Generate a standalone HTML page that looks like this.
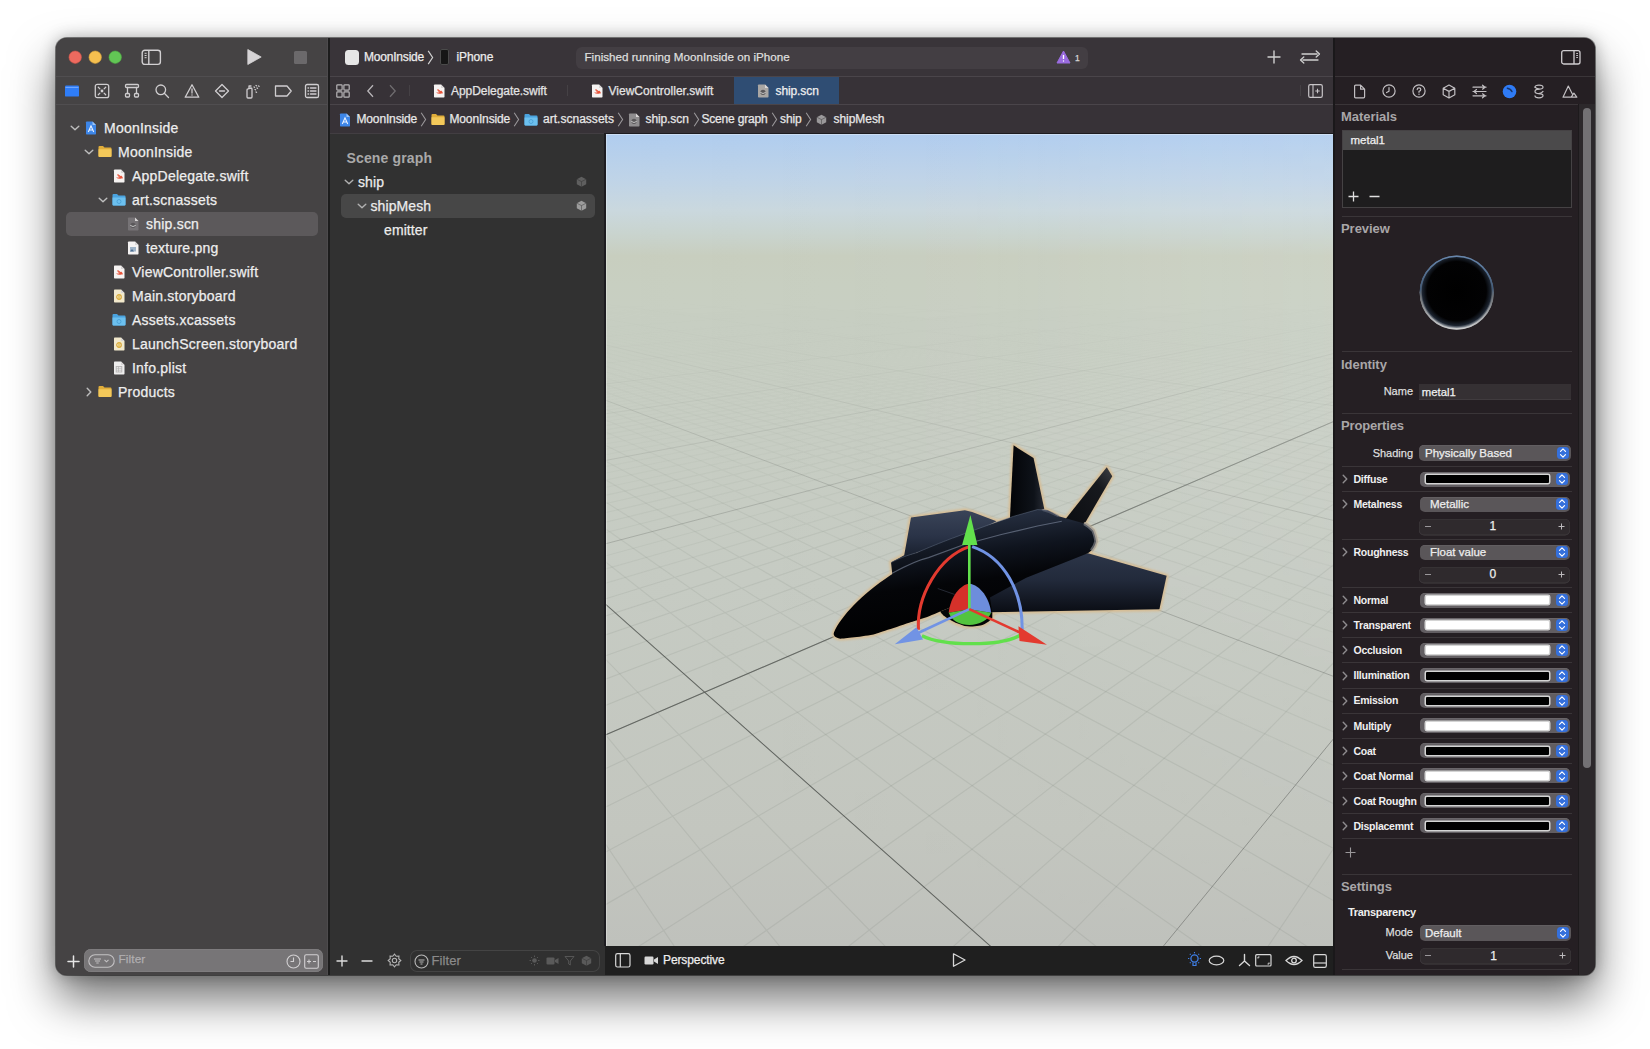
<!DOCTYPE html>
<html><head><meta charset="utf-8">
<style>
*{box-sizing:border-box;margin:0;padding:0}
html,body{width:1650px;height:1049px;background:#fff;overflow:hidden;font-family:"Liberation Sans",sans-serif;}
.a{position:absolute;display:block}
.t{position:absolute;white-space:nowrap}
.r{-webkit-text-stroke:0.25px currentColor}
#shadow{position:absolute;left:56px;top:38px;width:1539px;height:937px;border-radius:11px;background:#2f2c2f;box-shadow:0 24px 46px rgba(0,0,0,0.56),0 0 16px rgba(0,0,0,0.28),0 0 0 1px rgba(0,0,0,0.45)}
#app{position:absolute;left:0;top:0;width:1650px;height:1049px;clip-path:inset(38px 55px 74px 56px round 11px);}
</style></head><body>
<div id="shadow"></div>
<div id="app">
<div class="a" style="left:56px;top:38px;width:272px;height:937px;background:#454344;"></div>
<div class="a" style="left:56px;top:76px;width:272px;height:1px;background:#504e50;"></div>
<div class="a" style="left:56px;top:104px;width:272px;height:1px;background:#504e50;"></div>
<div class="a" style="left:327px;top:38px;width:1px;height:937px;background:#4d4b4d;"></div>
<div class="a" style="left:328px;top:38px;width:2px;height:937px;background:#1c1c1c;"></div>
<svg class="a" style="left:56px;top:38px;" width="80" height="38" viewBox="0 0 80 38"><circle cx="19.200000000000003" cy="19.2" r="6.2" fill="#ee6a5f" stroke="#d1554a" stroke-width="0.6"/><circle cx="39.2" cy="19.2" r="6.2" fill="#f5bf4f" stroke="#d9a23a" stroke-width="0.6"/><circle cx="59.2" cy="19.2" r="6.2" fill="#62c655" stroke="#4fae43" stroke-width="0.6"/></svg>
<svg class="a" style="left:141px;top:49px;" width="21" height="17" viewBox="0 0 21 17"><rect x="1.2" y="1.2" width="18.2" height="14.2" rx="2.6" fill="none" stroke="#d2d0d2" stroke-width="1.4"/><path d="M7.8 1.2 V15.4" stroke="#d2d0d2" stroke-width="1.4"/><path d="M3.6 4.3 H5.6 M3.6 6.5 H5.6 M3.6 8.7 H5.6" stroke="#d2d0d2" stroke-width="1"/></svg>
<svg class="a" style="left:245px;top:48px;" width="20" height="18" viewBox="0 0 20 18"><path d="M2.8 1.5 L16.2 9 L2.8 16.5 Z" fill="#d6d4d6" stroke="#d6d4d6" stroke-width="0.8" stroke-linejoin="round"/></svg>
<div class="a" style="left:294px;top:51px;width:13px;height:13px;background:#6b696b;border-radius:1.5px"></div>
<svg class="a" style="left:64px;top:84px;" width="16" height="14" viewBox="0 0 16 14"><rect x="1" y="1.6" width="14" height="11" rx="1.2" fill="#2f7df7"/><path d="M1.5 3.4 H14.5" stroke="#7fb0ff" stroke-width="0.9"/></svg>
<svg class="a" style="left:94px;top:83px;" width="16" height="16" viewBox="0 0 16 16"><rect x="1.3" y="1.3" width="13.4" height="13.4" rx="2" fill="none" stroke="#cfcdcf" stroke-width="1.3" stroke-linecap="round" stroke-linejoin="round"/><path d="M4.3 4.3 L5.9 5.9 M11.7 4.3 L10.1 5.9 M4.3 11.7 L5.9 10.1 M11.7 11.7 L10.1 10.1" fill="none" stroke="#cfcdcf" stroke-width="1.3" stroke-linecap="round" stroke-linejoin="round" stroke-width="1"/><circle cx="8" cy="8" r="1.4" fill="#d8d6d8"/></svg>
<svg class="a" style="left:124px;top:83px;" width="16" height="16" viewBox="0 0 16 16"><rect x="1.5" y="1.5" width="13" height="3" rx="1" fill="none" stroke="#cfcdcf" stroke-width="1.3" stroke-linecap="round" stroke-linejoin="round"/><path d="M3.5 4.5 V10.5 M12.5 4.5 V10.5" fill="none" stroke="#cfcdcf" stroke-width="1.3" stroke-linecap="round" stroke-linejoin="round"/><rect x="1.5" y="10.5" width="4" height="3.5" rx="1" fill="none" stroke="#cfcdcf" stroke-width="1.3" stroke-linecap="round" stroke-linejoin="round"/><rect x="10.5" y="10.5" width="4" height="3.5" rx="1" fill="none" stroke="#cfcdcf" stroke-width="1.3" stroke-linecap="round" stroke-linejoin="round"/></svg>
<svg class="a" style="left:154px;top:83px;" width="16" height="16" viewBox="0 0 16 16"><circle cx="6.8" cy="6.8" r="4.8" fill="none" stroke="#cfcdcf" stroke-width="1.3" stroke-linecap="round" stroke-linejoin="round"/><path d="M10.3 10.3 L14.5 14.5" fill="none" stroke="#cfcdcf" stroke-width="1.3" stroke-linecap="round" stroke-linejoin="round"/></svg>
<svg class="a" style="left:184px;top:83px;" width="16" height="16" viewBox="0 0 16 16"><path d="M8 1.8 L14.8 14.2 L1.2 14.2 Z" fill="none" stroke="#cfcdcf" stroke-width="1.3" stroke-linecap="round" stroke-linejoin="round"/><path d="M8 6 V10" fill="none" stroke="#cfcdcf" stroke-width="1.3" stroke-linecap="round" stroke-linejoin="round"/><circle cx="8" cy="12" r="0.7" fill="#cfcdcf"/></svg>
<svg class="a" style="left:214px;top:83px;" width="16" height="16" viewBox="0 0 16 16"><path d="M8 1.5 L14.5 8 L8 14.5 L1.5 8 Z" fill="none" stroke="#cfcdcf" stroke-width="1.3" stroke-linecap="round" stroke-linejoin="round"/><path d="M5.5 8 H10.5" fill="none" stroke="#cfcdcf" stroke-width="1.3" stroke-linecap="round" stroke-linejoin="round"/></svg>
<svg class="a" style="left:244px;top:83px;" width="17" height="16" viewBox="0 0 17 16"><path d="M3 7 Q3 6 4 5.8 L7 5 Q8 5 8 6 L8 14 Q8 15 7 15 L4 15 Q3 15 3 14 Z" fill="none" stroke="#cfcdcf" stroke-width="1.3" stroke-linecap="round" stroke-linejoin="round"/><path d="M5 5 V3 H7" fill="none" stroke="#cfcdcf" stroke-width="1.3" stroke-linecap="round" stroke-linejoin="round"/><path d="M10 4 L10.5 4.3 M12 2.5 L12.5 2.8 M11 6.5 L11.5 6.8 M13 5 L13.5 5.3 M12 9 L12.5 9.3 M14.5 3 L15 3.3" fill="none" stroke="#cfcdcf" stroke-width="1.3" stroke-linecap="round" stroke-linejoin="round" stroke-width="1"/></svg>
<svg class="a" style="left:274px;top:84px;" width="19" height="14" viewBox="0 0 19 14"><path d="M1.5 2 H13 L17.2 7 L13 12 H1.5 Z" fill="none" stroke="#cfcdcf" stroke-width="1.3" stroke-linecap="round" stroke-linejoin="round"/></svg>
<svg class="a" style="left:304px;top:83px;" width="16" height="16" viewBox="0 0 16 16"><rect x="1.5" y="1.5" width="13" height="13" rx="1.6" fill="none" stroke="#cfcdcf" stroke-width="1.3" stroke-linecap="round" stroke-linejoin="round"/><path d="M4 5 H4.6 M4 8 H4.6 M4 11 H4.6 M6.5 5 H12 M6.5 8 H12 M6.5 11 H12" fill="none" stroke="#cfcdcf" stroke-width="1.3" stroke-linecap="round" stroke-linejoin="round" stroke-width="1.1"/></svg>
<div class="a" style="left:66px;top:212px;width:252px;height:23.5px;background:#5c595b;border-radius:5px"></div>
<svg class="a" style="left:69.5px;top:123.5px;" width="10" height="8" viewBox="0 0 10 8"><path d="M1.2 2.2 L5 5.8 L8.8 2.2" fill="none" stroke="#bdbdbd" stroke-width="1.4" stroke-linecap="round" stroke-linejoin="round"/></svg>
<svg class="a" style="left:85px;top:120.5px;" width="12" height="14" viewBox="0 0 12 14"><path d="M1 1.2 Q1 0.5 1.7 0.5 L7.5 0.5 L11 4 L11 12.8 Q11 13.5 10.3 13.5 L1.7 13.5 Q1 13.5 1 12.8 Z" fill="#3d86e8"/><path d="M7.5 0.5 L7.5 4 L11 4 Z" fill="#9cc4f5"/><path d="M3.3 11 L6 4.8 L8.7 11 M4.2 9 H7.8" fill="none" stroke="#eaf2ff" stroke-width="1.1"/></svg>
<div class="t r" style="left:104px;top:118.15px;font-size:14px;line-height:20px;color:#eeeeee;font-weight:400;letter-spacing:0.22px;">MoonInside</div>
<svg class="a" style="left:83.5px;top:147.5px;" width="10" height="8" viewBox="0 0 10 8"><path d="M1.2 2.2 L5 5.8 L8.8 2.2" fill="none" stroke="#bdbdbd" stroke-width="1.4" stroke-linecap="round" stroke-linejoin="round"/></svg>
<svg class="a" style="left:98px;top:145.0px;" width="14" height="13" viewBox="0 0 14 13"><path d="M0.5 2 Q0.5 1 1.5 1 L5 1 L6.5 2.5 L12.5 2.5 Q13.5 2.5 13.5 3.5 L13.5 11 Q13.5 12 12.5 12 L1.5 12 Q0.5 12 0.5 11 Z" fill="#e0ad3a"/><path d="M0.5 4.3 L13.5 4.3 L13.5 11 Q13.5 12 12.5 12 L1.5 12 Q0.5 12 0.5 11 Z" fill="#f3c85a"/></svg>
<div class="t r" style="left:118px;top:142.15px;font-size:14px;line-height:20px;color:#eeeeee;font-weight:400;letter-spacing:0.22px;">MoonInside</div>
<svg class="a" style="left:113px;top:168.5px;" width="12" height="14" viewBox="0 0 12 14"><path d="M1 1.2 Q1 0.5 1.7 0.5 L8 0.5 L11.5 4 L11.5 12.8 Q11.5 13.5 10.8 13.5 L1.7 13.5 Q1 13.5 1 12.8 Z" fill="#f6f3f2"/><path d="M8 0.5 L8 4 L11.5 4 Z" fill="#d9d6d6"/><path d="M3 8.5 Q5.5 10.5 8.5 9.5 Q9.8 9 10 10.2 Q10 8 8.5 6.5 Q8 9 4 6 Q6 8.3 6.5 8.3 Q5 8.6 3 8.5Z" fill="#e8533a"/><path d="M4.5 5.5 L8 8" stroke="#e8533a" stroke-width="1.1"/></svg>
<div class="t r" style="left:132px;top:166.15px;font-size:14px;line-height:20px;color:#eeeeee;font-weight:400;letter-spacing:0.22px;">AppDelegate.swift</div>
<svg class="a" style="left:97.5px;top:195.5px;" width="10" height="8" viewBox="0 0 10 8"><path d="M1.2 2.2 L5 5.8 L8.8 2.2" fill="none" stroke="#bdbdbd" stroke-width="1.4" stroke-linecap="round" stroke-linejoin="round"/></svg>
<svg class="a" style="left:112px;top:193.0px;" width="14" height="13" viewBox="0 0 14 13"><path d="M0.5 2 Q0.5 1 1.5 1 L5 1 L6.5 2.5 L12.5 2.5 Q13.5 2.5 13.5 3.5 L13.5 11.5 Q13.5 12.5 12.5 12.5 L1.5 12.5 Q0.5 12.5 0.5 11.5 Z" fill="#4aa3df"/><path d="M0.5 4.5 L13.5 4.5 L13.5 11.5 Q13.5 12.5 12.5 12.5 L1.5 12.5 Q0.5 12.5 0.5 11.5 Z" fill="#6cc0ef"/><circle cx="7" cy="8.5" r="2" fill="none" stroke="#4a9fd6" stroke-width="0.9"/></svg>
<div class="t r" style="left:132px;top:190.15px;font-size:14px;line-height:20px;color:#eeeeee;font-weight:400;letter-spacing:0.22px;">art.scnassets</div>
<svg class="a" style="left:127px;top:216.5px;" width="12" height="14" viewBox="0 0 12 14"><path d="M1 1.2 Q1 0.5 1.7 0.5 L8 0.5 L11.5 4 L11.5 12.8 Q11.5 13.5 10.8 13.5 L1.7 13.5 Q1 13.5 1 12.8 Z" fill="#767376"/><path d="M8 0.5 L8 4 L11.5 4 Z" fill="#d9d6d6"/><circle cx="6" cy="8.3" r="2.6" fill="#5a585a"/><path d="M3.2 8.3 Q6 10.8 8.8 8.3" fill="none" stroke="#cfcfcf" stroke-width="0.9"/></svg>
<div class="t r" style="left:146px;top:214.15px;font-size:14px;line-height:20px;color:#eeeeee;font-weight:400;letter-spacing:0.22px;">ship.scn</div>
<svg class="a" style="left:127px;top:240.5px;" width="12" height="14" viewBox="0 0 12 14"><path d="M1 1.2 Q1 0.5 1.7 0.5 L8 0.5 L11.5 4 L11.5 12.8 Q11.5 13.5 10.8 13.5 L1.7 13.5 Q1 13.5 1 12.8 Z" fill="#f4f2f2"/><path d="M8 0.5 L8 4 L11.5 4 Z" fill="#d9d6d6"/><rect x="3" y="6" width="6" height="4.5" fill="#9fb4c8"/><path d="M3 10.5 L5 8 L7 10.5 Z" fill="#4d6f94"/></svg>
<div class="t r" style="left:146px;top:238.15px;font-size:14px;line-height:20px;color:#eeeeee;font-weight:400;letter-spacing:0.22px;">texture.png</div>
<svg class="a" style="left:113px;top:264.5px;" width="12" height="14" viewBox="0 0 12 14"><path d="M1 1.2 Q1 0.5 1.7 0.5 L8 0.5 L11.5 4 L11.5 12.8 Q11.5 13.5 10.8 13.5 L1.7 13.5 Q1 13.5 1 12.8 Z" fill="#f6f3f2"/><path d="M8 0.5 L8 4 L11.5 4 Z" fill="#d9d6d6"/><path d="M3 8.5 Q5.5 10.5 8.5 9.5 Q9.8 9 10 10.2 Q10 8 8.5 6.5 Q8 9 4 6 Q6 8.3 6.5 8.3 Q5 8.6 3 8.5Z" fill="#e8533a"/><path d="M4.5 5.5 L8 8" stroke="#e8533a" stroke-width="1.1"/></svg>
<div class="t r" style="left:132px;top:262.15px;font-size:14px;line-height:20px;color:#eeeeee;font-weight:400;letter-spacing:0.22px;">ViewController.swift</div>
<svg class="a" style="left:113px;top:288.5px;" width="12" height="14" viewBox="0 0 12 14"><path d="M1 1.2 Q1 0.5 1.7 0.5 L8 0.5 L11.5 4 L11.5 12.8 Q11.5 13.5 10.8 13.5 L1.7 13.5 Q1 13.5 1 12.8 Z" fill="#f2e9cc"/><path d="M8 0.5 L8 4 L11.5 4 Z" fill="#d9d6d6"/><circle cx="6" cy="8" r="2.3" fill="none" stroke="#d9a83a" stroke-width="1.2"/><rect x="5.3" y="5.5" width="1.4" height="5" fill="#e0b84a"/></svg>
<div class="t r" style="left:132px;top:286.15px;font-size:14px;line-height:20px;color:#eeeeee;font-weight:400;letter-spacing:0.22px;">Main.storyboard</div>
<svg class="a" style="left:112px;top:313.0px;" width="14" height="13" viewBox="0 0 14 13"><path d="M0.5 2 Q0.5 1 1.5 1 L5 1 L6.5 2.5 L12.5 2.5 Q13.5 2.5 13.5 3.5 L13.5 11.5 Q13.5 12.5 12.5 12.5 L1.5 12.5 Q0.5 12.5 0.5 11.5 Z" fill="#4aa3df"/><path d="M0.5 4.5 L13.5 4.5 L13.5 11.5 Q13.5 12.5 12.5 12.5 L1.5 12.5 Q0.5 12.5 0.5 11.5 Z" fill="#6cc0ef"/><circle cx="7" cy="8.5" r="2" fill="none" stroke="#4a9fd6" stroke-width="0.9"/></svg>
<div class="t r" style="left:132px;top:310.15px;font-size:14px;line-height:20px;color:#eeeeee;font-weight:400;letter-spacing:0.22px;">Assets.xcassets</div>
<svg class="a" style="left:113px;top:336.5px;" width="12" height="14" viewBox="0 0 12 14"><path d="M1 1.2 Q1 0.5 1.7 0.5 L8 0.5 L11.5 4 L11.5 12.8 Q11.5 13.5 10.8 13.5 L1.7 13.5 Q1 13.5 1 12.8 Z" fill="#f2e9cc"/><path d="M8 0.5 L8 4 L11.5 4 Z" fill="#d9d6d6"/><circle cx="6" cy="8" r="2.3" fill="none" stroke="#d9a83a" stroke-width="1.2"/><rect x="5.3" y="5.5" width="1.4" height="5" fill="#e0b84a"/></svg>
<div class="t r" style="left:132px;top:334.15px;font-size:14px;line-height:20px;color:#eeeeee;font-weight:400;letter-spacing:0.22px;">LaunchScreen.storyboard</div>
<svg class="a" style="left:113px;top:360.5px;" width="12" height="14" viewBox="0 0 12 14"><path d="M1 1.2 Q1 0.5 1.7 0.5 L8 0.5 L11.5 4 L11.5 12.8 Q11.5 13.5 10.8 13.5 L1.7 13.5 Q1 13.5 1 12.8 Z" fill="#eeeded"/><path d="M8 0.5 L8 4 L11.5 4 Z" fill="#d9d6d6"/><rect x="3.2" y="5.5" width="5.6" height="5.5" fill="none" stroke="#b5b3b3" stroke-width="0.9"/><path d="M3.2 7.3 H8.8 M3.2 9.2 H8.8 M5.5 5.5 V11" stroke="#b5b3b3" stroke-width="0.7"/></svg>
<div class="t r" style="left:132px;top:358.15px;font-size:14px;line-height:20px;color:#eeeeee;font-weight:400;letter-spacing:0.22px;">Info.plist</div>
<svg class="a" style="left:84.5px;top:386.5px;" width="8" height="10" viewBox="0 0 8 10"><path d="M2.2 1.2 L5.8 5 L2.2 8.8" fill="none" stroke="#bdbdbd" stroke-width="1.4" stroke-linecap="round" stroke-linejoin="round"/></svg>
<svg class="a" style="left:98px;top:385.0px;" width="14" height="13" viewBox="0 0 14 13"><path d="M0.5 2 Q0.5 1 1.5 1 L5 1 L6.5 2.5 L12.5 2.5 Q13.5 2.5 13.5 3.5 L13.5 11 Q13.5 12 12.5 12 L1.5 12 Q0.5 12 0.5 11 Z" fill="#e0ad3a"/><path d="M0.5 4.3 L13.5 4.3 L13.5 11 Q13.5 12 12.5 12 L1.5 12 Q0.5 12 0.5 11 Z" fill="#f3c85a"/></svg>
<div class="t r" style="left:118px;top:382.15px;font-size:14px;line-height:20px;color:#eeeeee;font-weight:400;letter-spacing:0.22px;">Products</div>
<svg class="a" style="left:67px;top:955px;" width="13" height="13" viewBox="0 0 13 13"><path d="M6.5 1 V12 M1 6.5 H12" stroke="#e6e6e6" stroke-width="1.5" stroke-linecap="round"/></svg>
<div class="a" style="left:84px;top:949px;width:239px;height:23px;background:#777577;border-radius:7px;box-shadow:inset 0 0 0 0.5px #858385"></div>
<svg class="a" style="left:88px;top:954px;" width="27" height="14" viewBox="0 0 27 14"><rect x="0.8" y="0.8" width="25.4" height="12.4" rx="6.2" fill="none" stroke="#c4c2c4" stroke-width="1.1"/><path d="M6 5 H13 M7 7 H12 M8.3 9 H10.7" stroke="#c4c2c4" stroke-width="1"/><path d="M16.5 5.8 L18.5 7.8 L20.5 5.8" fill="none" stroke="#c4c2c4" stroke-width="1.1"/></svg>
<div class="t r" style="left:118.5px;top:951.41px;font-size:11.8px;line-height:17px;color:#b0aeb0;font-weight:400;letter-spacing:0.1px;">Filter</div>
<svg class="a" style="left:286px;top:954px;" width="15" height="15" viewBox="0 0 15 15"><circle cx="7.5" cy="7.5" r="6.5" fill="none" stroke="#d2d0d2" stroke-width="1.1"/><path d="M7.5 3.5 V7.5 H4.5" fill="none" stroke="#d2d0d2" stroke-width="1.1"/></svg>
<svg class="a" style="left:304px;top:954px;" width="15" height="15" viewBox="0 0 15 15"><rect x="0.7" y="0.7" width="13.6" height="13.6" rx="1.5" fill="none" stroke="#d2d0d2" stroke-width="1.1"/><path d="M3 7.5 H7 M5 5.5 V9.5 M9 7.5 H12" stroke="#d2d0d2" stroke-width="1.1"/></svg>
<div class="a" style="left:330px;top:38px;width:1003px;height:38px;background:#393439;"></div>
<div class="a" style="left:330px;top:76px;width:1003px;height:1px;background:#4a454a;"></div>
<div class="a" style="left:330px;top:77px;width:1003px;height:27px;background:#373237;"></div>
<div class="a" style="left:330px;top:104px;width:1003px;height:1px;background:#4a454a;"></div>
<div class="a" style="left:330px;top:105px;width:1003px;height:28px;background:#373237;"></div>
<div class="a" style="left:344.5px;top:50px;width:14.5px;height:14.5px;background:#e6e6e6;border-radius:3.5px"></div>
<div class="t r" style="left:364px;top:48.84px;font-size:12px;line-height:17px;color:#ececec;font-weight:400;letter-spacing:-0.2px;">MoonInside</div>
<svg class="a" style="left:427px;top:50px;" width="7" height="15" viewBox="0 0 7 15"><path d="M1.2 0.8 L5.6 7.5 L1.2 14.2" fill="none" stroke="#cfcfcf" stroke-width="1.2"/></svg>
<div class="a" style="left:440px;top:48.5px;width:9px;height:16.5px;background:#161616;border-radius:2px;box-shadow:inset 0 0 0 1px #4a4a4a"></div>
<div class="t r" style="left:456.5px;top:48.84px;font-size:12px;line-height:17px;color:#ececec;font-weight:400;letter-spacing:-0.1px;">iPhone</div>
<div class="a" style="left:576px;top:47px;width:512px;height:22px;background:#433e43;border-radius:6px"></div>
<div class="t r" style="left:584.5px;top:49.46px;font-size:11.65px;line-height:16px;color:#dedede;font-weight:400;letter-spacing:0px;">Finished running MoonInside on iPhone</div>
<svg class="a" style="left:1056px;top:50px;" width="15" height="14" viewBox="0 0 15 14"><path d="M7.5 1 L14 13 L1 13 Z" fill="#9a6ce0" stroke="#9a6ce0" stroke-width="1" stroke-linejoin="round"/><path d="M7.5 5 V9" stroke="#fff" stroke-width="1.3"/><circle cx="7.5" cy="11" r="0.7" fill="#fff"/></svg>
<div class="t r" style="left:1075px;top:52.25px;font-size:8.5px;line-height:12px;color:#d8d8d8;font-weight:400;letter-spacing:0px;">1</div>
<svg class="a" style="left:1267px;top:50px;" width="14" height="14" viewBox="0 0 14 14"><path d="M7 1 V13 M1 7 H13" stroke="#d0d0d0" stroke-width="1.4" stroke-linecap="round"/></svg>
<svg class="a" style="left:1299px;top:49px;" width="22" height="16" viewBox="0 0 22 16"><path d="M4 11 H19 M1.5 11 L4.8 8 M1.5 11 L4.8 14 M3 5 H18 M20.5 5 L17.2 2 M20.5 5 L17.2 8" fill="none" stroke="#d0d0d0" stroke-width="1.3" stroke-linecap="round"/></svg>
<svg class="a" style="left:336px;top:84px;" width="14" height="14" viewBox="0 0 14 14"><g fill="none" stroke="#b8b5b8" stroke-width="1.2"><rect x="0.8" y="0.8" width="5.3" height="5.3" rx="0.8"/><rect x="7.9" y="0.8" width="5.3" height="5.3" rx="0.8"/><rect x="0.8" y="7.9" width="5.3" height="5.3" rx="0.8"/><rect x="7.9" y="7.9" width="5.3" height="5.3" rx="0.8"/></g></svg>
<svg class="a" style="left:366px;top:84px;" width="9" height="14" viewBox="0 0 9 14"><path d="M7 1.2 L1.8 7 L7 12.8" fill="none" stroke="#b8b5b8" stroke-width="1.3"/></svg>
<svg class="a" style="left:388px;top:84px;" width="9" height="14" viewBox="0 0 9 14"><path d="M2 1.2 L7.2 7 L2 12.8" fill="none" stroke="#6f6c6f" stroke-width="1.3"/></svg>
<div class="a" style="left:409px;top:85px;width:1px;height:11px;background:#454145;"></div>
<svg class="a" style="left:433px;top:83.5px;" width="12" height="14" viewBox="0 0 12 14"><path d="M1 1.2 Q1 0.5 1.7 0.5 L8 0.5 L11.5 4 L11.5 12.8 Q11.5 13.5 10.8 13.5 L1.7 13.5 Q1 13.5 1 12.8 Z" fill="#f6f3f2"/><path d="M8 0.5 L8 4 L11.5 4 Z" fill="#d9d6d6"/><path d="M3 8.5 Q5.5 10.5 8.5 9.5 Q9.8 9 10 10.2 Q10 8 8.5 6.5 Q8 9 4 6 Q6 8.3 6.5 8.3 Q5 8.6 3 8.5Z" fill="#e8533a"/><path d="M4.5 5.5 L8 8" stroke="#e8533a" stroke-width="1.1"/></svg>
<div class="t r" style="left:451px;top:82.64px;font-size:12px;line-height:17px;color:#e4e4e4;font-weight:400;letter-spacing:-0.05px;">AppDelegate.swift</div>
<div class="a" style="left:567px;top:85px;width:1px;height:11px;background:#454145;"></div>
<svg class="a" style="left:591px;top:83.5px;" width="12" height="14" viewBox="0 0 12 14"><path d="M1 1.2 Q1 0.5 1.7 0.5 L8 0.5 L11.5 4 L11.5 12.8 Q11.5 13.5 10.8 13.5 L1.7 13.5 Q1 13.5 1 12.8 Z" fill="#f6f3f2"/><path d="M8 0.5 L8 4 L11.5 4 Z" fill="#d9d6d6"/><path d="M3 8.5 Q5.5 10.5 8.5 9.5 Q9.8 9 10 10.2 Q10 8 8.5 6.5 Q8 9 4 6 Q6 8.3 6.5 8.3 Q5 8.6 3 8.5Z" fill="#e8533a"/><path d="M4.5 5.5 L8 8" stroke="#e8533a" stroke-width="1.1"/></svg>
<div class="t r" style="left:608.5px;top:82.64px;font-size:12px;line-height:17px;color:#e4e4e4;font-weight:400;letter-spacing:0.02px;">ViewController.swift</div>
<div class="a" style="left:734px;top:77px;width:105px;height:27px;background:#2f4d73;"></div>
<svg class="a" style="left:757px;top:83.5px;" width="12" height="14" viewBox="0 0 12 14"><path d="M1 1.2 Q1 0.5 1.7 0.5 L8 0.5 L11.5 4 L11.5 12.8 Q11.5 13.5 10.8 13.5 L1.7 13.5 Q1 13.5 1 12.8 Z" fill="#a9a6a3"/><path d="M8 0.5 L8 4 L11.5 4 Z" fill="#d9d6d6"/><circle cx="6" cy="8.3" r="2.6" fill="#5a585a"/><path d="M3.2 8.3 Q6 10.8 8.8 8.3" fill="none" stroke="#cfcfcf" stroke-width="0.9"/></svg>
<div class="t r" style="left:775.5px;top:82.64px;font-size:12px;line-height:17px;color:#f0f0f0;font-weight:400;letter-spacing:-0.1px;">ship.scn</div>
<div class="a" style="left:1300px;top:85px;width:1px;height:11px;background:#454145;"></div>
<svg class="a" style="left:1308px;top:84px;" width="15" height="14" viewBox="0 0 15 14"><rect x="0.7" y="0.7" width="13.6" height="12.6" rx="1.6" fill="none" stroke="#c8c5c8" stroke-width="1.2"/><path d="M5 0.7 V13.3 M7.3 7 H11.7 M9.5 4.8 V9.2" stroke="#c8c5c8" stroke-width="1.1"/></svg>
<svg class="a" style="left:338.5px;top:112.5px;" width="12" height="14" viewBox="0 0 12 14"><path d="M1 1.2 Q1 0.5 1.7 0.5 L7.5 0.5 L11 4 L11 12.8 Q11 13.5 10.3 13.5 L1.7 13.5 Q1 13.5 1 12.8 Z" fill="#3d86e8"/><path d="M7.5 0.5 L7.5 4 L11 4 Z" fill="#9cc4f5"/><path d="M3.3 11 L6 4.8 L8.7 11 M4.2 9 H7.8" fill="none" stroke="#eaf2ff" stroke-width="1.1"/></svg>
<div class="t r" style="left:356.5px;top:111.44px;font-size:12px;line-height:17px;color:#e8e8e8;font-weight:400;letter-spacing:-0.15px;">MoonInside</div>
<svg class="a" style="left:420px;top:112px;" width="7" height="15" viewBox="0 0 7 15"><path d="M1.2 0.8 L5.6 7.5 L1.2 14.2" fill="none" stroke="#9a979a" stroke-width="1.1"/></svg>
<svg class="a" style="left:430.5px;top:113px;" width="14" height="13" viewBox="0 0 14 13"><path d="M0.5 2 Q0.5 1 1.5 1 L5 1 L6.5 2.5 L12.5 2.5 Q13.5 2.5 13.5 3.5 L13.5 11 Q13.5 12 12.5 12 L1.5 12 Q0.5 12 0.5 11 Z" fill="#e0ad3a"/><path d="M0.5 4.3 L13.5 4.3 L13.5 11 Q13.5 12 12.5 12 L1.5 12 Q0.5 12 0.5 11 Z" fill="#f3c85a"/></svg>
<div class="t r" style="left:449.5px;top:111.44px;font-size:12px;line-height:17px;color:#e8e8e8;font-weight:400;letter-spacing:-0.15px;">MoonInside</div>
<svg class="a" style="left:513px;top:112px;" width="7" height="15" viewBox="0 0 7 15"><path d="M1.2 0.8 L5.6 7.5 L1.2 14.2" fill="none" stroke="#9a979a" stroke-width="1.1"/></svg>
<svg class="a" style="left:523.5px;top:113px;" width="14" height="13" viewBox="0 0 14 13"><path d="M0.5 2 Q0.5 1 1.5 1 L5 1 L6.5 2.5 L12.5 2.5 Q13.5 2.5 13.5 3.5 L13.5 11.5 Q13.5 12.5 12.5 12.5 L1.5 12.5 Q0.5 12.5 0.5 11.5 Z" fill="#4aa3df"/><path d="M0.5 4.5 L13.5 4.5 L13.5 11.5 Q13.5 12.5 12.5 12.5 L1.5 12.5 Q0.5 12.5 0.5 11.5 Z" fill="#6cc0ef"/><circle cx="7" cy="8.5" r="2" fill="none" stroke="#4a9fd6" stroke-width="0.9"/></svg>
<div class="t r" style="left:543px;top:111.44px;font-size:12px;line-height:17px;color:#e8e8e8;font-weight:400;letter-spacing:0.02px;">art.scnassets</div>
<svg class="a" style="left:617px;top:112px;" width="7" height="15" viewBox="0 0 7 15"><path d="M1.2 0.8 L5.6 7.5 L1.2 14.2" fill="none" stroke="#9a979a" stroke-width="1.1"/></svg>
<svg class="a" style="left:627.5px;top:112.5px;" width="12" height="14" viewBox="0 0 12 14"><path d="M1 1.2 Q1 0.5 1.7 0.5 L8 0.5 L11.5 4 L11.5 12.8 Q11.5 13.5 10.8 13.5 L1.7 13.5 Q1 13.5 1 12.8 Z" fill="#8f8d8f"/><path d="M8 0.5 L8 4 L11.5 4 Z" fill="#d9d6d6"/><circle cx="6" cy="8.3" r="2.6" fill="#5a585a"/><path d="M3.2 8.3 Q6 10.8 8.8 8.3" fill="none" stroke="#cfcfcf" stroke-width="0.9"/></svg>
<div class="t r" style="left:645.5px;top:111.44px;font-size:12px;line-height:17px;color:#e8e8e8;font-weight:400;letter-spacing:-0.1px;">ship.scn</div>
<svg class="a" style="left:693px;top:112px;" width="7" height="15" viewBox="0 0 7 15"><path d="M1.2 0.8 L5.6 7.5 L1.2 14.2" fill="none" stroke="#9a979a" stroke-width="1.1"/></svg>
<div class="t r" style="left:701.5px;top:111.44px;font-size:12px;line-height:17px;color:#e8e8e8;font-weight:400;letter-spacing:-0.2px;">Scene graph</div>
<svg class="a" style="left:770.5px;top:112px;" width="7" height="15" viewBox="0 0 7 15"><path d="M1.2 0.8 L5.6 7.5 L1.2 14.2" fill="none" stroke="#9a979a" stroke-width="1.1"/></svg>
<div class="t r" style="left:780px;top:111.44px;font-size:12px;line-height:17px;color:#e8e8e8;font-weight:400;letter-spacing:-0.1px;">ship</div>
<svg class="a" style="left:804.5px;top:112px;" width="7" height="15" viewBox="0 0 7 15"><path d="M1.2 0.8 L5.6 7.5 L1.2 14.2" fill="none" stroke="#9a979a" stroke-width="1.1"/></svg>
<svg class="a" style="left:816px;top:113.5px;" width="11" height="11.5" viewBox="0 0 11 11.5"><path d="M5.5 0.8 L10.2 3.2 L10.2 8.3 L5.5 10.7 L0.8 8.3 L0.8 3.2 Z" fill="#9a989a"/><path d="M0.8 3.2 L5.5 5.6 L10.2 3.2 M5.5 5.6 V10.7" fill="none" stroke="#2f2f2f" stroke-width="0.8" opacity="0.55"/></svg>
<div class="t r" style="left:833.5px;top:111.44px;font-size:12px;line-height:17px;color:#e8e8e8;font-weight:400;letter-spacing:-0.05px;">shipMesh</div>
<div class="a" style="left:330px;top:134px;width:275px;height:812px;background:#313131;"></div>
<div class="t" style="left:346.5px;top:148.35px;font-size:14px;line-height:20px;color:#a9a9a9;font-weight:700;letter-spacing:0.15px;">Scene graph</div>
<svg class="a" style="left:343.7px;top:178px;" width="10" height="8" viewBox="0 0 10 8"><path d="M1.2 2.2 L5 5.8 L8.8 2.2" fill="none" stroke="#b0b0b0" stroke-width="1.4" stroke-linecap="round" stroke-linejoin="round"/></svg>
<div class="t r" style="left:358px;top:171.75px;font-size:14px;line-height:20px;color:#ececec;font-weight:400;letter-spacing:0.1px;">ship</div>
<svg class="a" style="left:575.5px;top:176px;" width="11" height="11.5" viewBox="0 0 11 11.5"><path d="M5.5 0.8 L10.2 3.2 L10.2 8.3 L5.5 10.7 L0.8 8.3 L0.8 3.2 Z" fill="#5f5f5f"/><path d="M0.8 3.2 L5.5 5.6 L10.2 3.2 M5.5 5.6 V10.7" fill="none" stroke="#2f2f2f" stroke-width="0.8" opacity="0.55"/></svg>
<div class="a" style="left:341px;top:194px;width:254px;height:23.5px;background:#474747;border-radius:5px"></div>
<svg class="a" style="left:357px;top:202px;" width="10" height="8" viewBox="0 0 10 8"><path d="M1.2 2.2 L5 5.8 L8.8 2.2" fill="none" stroke="#b0b0b0" stroke-width="1.4" stroke-linecap="round" stroke-linejoin="round"/></svg>
<div class="t r" style="left:370.5px;top:195.75px;font-size:14px;line-height:20px;color:#ececec;font-weight:400;letter-spacing:0.1px;">shipMesh</div>
<svg class="a" style="left:575.5px;top:200px;" width="11" height="11.5" viewBox="0 0 11 11.5"><path d="M5.5 0.8 L10.2 3.2 L10.2 8.3 L5.5 10.7 L0.8 8.3 L0.8 3.2 Z" fill="#9c9c9c"/><path d="M0.8 3.2 L5.5 5.6 L10.2 3.2 M5.5 5.6 V10.7" fill="none" stroke="#2f2f2f" stroke-width="0.8" opacity="0.55"/></svg>
<div class="t r" style="left:384px;top:219.75px;font-size:14px;line-height:20px;color:#ececec;font-weight:400;letter-spacing:0.1px;">emitter</div>
<div class="a" style="left:330px;top:946px;width:275px;height:29px;background:#313131;"></div>
<svg class="a" style="left:336px;top:955px;" width="12" height="12" viewBox="0 0 12 12"><path d="M6 1 V11 M1 6 H11" stroke="#dcdcdc" stroke-width="1.4" stroke-linecap="round"/></svg>
<svg class="a" style="left:361px;top:955px;" width="12" height="12" viewBox="0 0 12 12"><path d="M1 6 H11" stroke="#dcdcdc" stroke-width="1.4" stroke-linecap="round"/></svg>
<svg class="a" style="left:386.5px;top:953px;" width="15" height="15" viewBox="0 0 15 15"><g fill="none" stroke="#b4b4b4" stroke-width="1.1"><circle cx="7.5" cy="7.5" r="2.2"/><path d="M13.80 7.50 L11.75 9.26 L11.95 11.95 L9.26 11.75 L7.50 13.80 L5.74 11.75 L3.05 11.95 L3.25 9.26 L1.20 7.50 L3.25 5.74 L3.05 3.05 L5.74 3.25 L7.50 1.20 L9.26 3.25 L11.95 3.05 L11.75 5.74 Z"/></g></svg>
<div class="a" style="left:410px;top:950px;width:190px;height:21.5px;background:#303030;border-radius:7px;box-shadow:inset 0 0 0 1px #444444"></div>
<svg class="a" style="left:414px;top:953.5px;" width="15" height="15" viewBox="0 0 15 15"><circle cx="7.5" cy="7.5" r="6.5" fill="none" stroke="#b8b8b8" stroke-width="1.1"/><path d="M4.5 6 H10.5 M5.5 8 H9.5 M6.5 10 H8.5" stroke="#b8b8b8" stroke-width="1"/></svg>
<div class="t r" style="left:431.5px;top:951.50px;font-size:13px;line-height:18px;color:#8a8a8a;font-weight:400;letter-spacing:0.1px;">Filter</div>
<svg class="a" style="left:529px;top:955px;" width="11" height="11" viewBox="0 0 11 11"><circle cx="5.5" cy="5.5" r="2.3" fill="#5a5a5a"/><path d="M5.5 0.5 V2 M5.5 9 V10.5 M0.5 5.5 H2 M9 5.5 H10.5 M2 2 L3 3 M8 8 L9 9 M2 9 L3 8 M8 3 L9 2" stroke="#5a5a5a" stroke-width="0.9"/></svg>
<svg class="a" style="left:546px;top:955.5px;" width="13" height="10" viewBox="0 0 13 10"><rect x="0.5" y="1.5" width="8" height="7" rx="1" fill="#5a5a5a"/><path d="M9 4 L12.5 2 V8 L9 6 Z" fill="#5a5a5a"/></svg>
<svg class="a" style="left:564px;top:955px;" width="11" height="11" viewBox="0 0 11 11"><path d="M1 1.5 H10 L6.3 6 V10 L4.7 9 V6 Z" fill="none" stroke="#5a5a5a" stroke-width="0.9"/></svg>
<svg class="a" style="left:581px;top:954.5px;" width="11" height="11.5" viewBox="0 0 11 11.5"><path d="M5.5 0.8 L10.2 3.2 L10.2 8.3 L5.5 10.7 L0.8 8.3 L0.8 3.2 Z" fill="#5a5a5a"/><path d="M0.8 3.2 L5.5 5.6 L10.2 3.2 M5.5 5.6 V10.7" fill="none" stroke="#2f2f2f" stroke-width="0.8" opacity="0.55"/></svg>
<svg class="a" style="left:605px;top:134px" width="728" height="812" viewBox="0 0 728 812"><defs><linearGradient id="sky" gradientUnits="userSpaceOnUse" x1="0" y1="0" x2="0" y2="812"><stop offset="0" stop-color="#b0cdef"/><stop offset="0.059" stop-color="#c0d4e7"/><stop offset="0.094" stop-color="#cad8de"/><stop offset="0.122" stop-color="#c9d4cf"/><stop offset="0.150" stop-color="#c8cebf"/><stop offset="0.185" stop-color="#c8cfc1"/><stop offset="0.234" stop-color="#c8cfc3"/><stop offset="0.37" stop-color="#c7cdc3"/><stop offset="0.55" stop-color="#c6cbc3"/><stop offset="0.86" stop-color="#c3c6bf"/><stop offset="1" stop-color="#bfc1bc"/></linearGradient><linearGradient id="fogm" gradientUnits="userSpaceOnUse" x1="0" y1="114" x2="0" y2="534"><stop offset="0" stop-color="#000"/><stop offset="0.12" stop-color="#000"/><stop offset="0.35" stop-color="#666"/><stop offset="0.65" stop-color="#c8c8c8"/><stop offset="1" stop-color="#fff"/></linearGradient><linearGradient id="hl" x1="0" y1="0" x2="1" y2="0"><stop offset="0" stop-color="#fff" stop-opacity="0"/><stop offset="0.5" stop-color="#fff" stop-opacity="0.02"/><stop offset="1" stop-color="#fff" stop-opacity="0.09"/></linearGradient><linearGradient id="hlm" x1="0" y1="0" x2="0" y2="1"><stop offset="0" stop-color="#fff"/><stop offset="0.35" stop-color="#fff"/><stop offset="0.7" stop-color="#444"/><stop offset="1" stop-color="#000"/></linearGradient><mask id="hm" maskUnits="userSpaceOnUse" x="0" y="0" width="728" height="812"><rect width="728" height="812" fill="url(#hlm)"/></mask><mask id="gm" maskUnits="userSpaceOnUse" x="0" y="0" width="728" height="812"><rect width="728" height="812" fill="url(#fogm)"/></mask></defs><rect width="728" height="812" fill="url(#sky)"/><rect width="728" height="812" fill="url(#hl)" mask="url(#hm)"/><g mask="url(#gm)"><path d="M-399.9 114.3 L-4951.0 2185.0 M-399.9 114.3 L-4892.5 2309.2 M-399.9 114.3 L-4737.9 2600.6 M-399.9 114.3 L-4635.2 2771.9 M-399.9 114.3 L-4509.2 2962.8 M-399.9 114.3 L-4353.4 3175.3 M-399.9 114.3 L-4159.5 3410.7 M-399.9 114.3 L-3916.7 3668.6 M-399.9 114.3 L-3612.3 3945.9 M-399.9 114.3 L-3232.1 4234.9 M-399.9 114.3 L-2762.9 4520.7 M-399.9 114.3 L-1539.8 4982.6 M-399.9 114.3 L-814.0 5097.1 M-399.9 114.3 L-60.9 5102.8 M-399.9 114.3 L669.8 4998.5 M-399.9 114.3 L1335.5 4803.5 M-399.9 114.3 L1910.8 4548.3 M-399.9 114.3 L2389.4 4263.9 M-399.9 114.3 L2778.0 3974.5 M-399.9 114.3 L3089.3 3695.5 M1130.9 114.3 L4635.3 3680.7 M1130.9 114.3 L4329.7 3957.2 M1130.9 114.3 L3478.8 4528.8 M1130.9 114.3 L2913.5 4785.7 M1130.9 114.3 L2257.9 4985.7 M1130.9 114.3 L1535.0 5098.0 M1130.9 114.3 L785.9 5102.4 M1130.9 114.3 L59.3 4998.1 M1130.9 114.3 L-602.9 4804.1 M1130.9 114.3 L-1175.7 4550.5 M1130.9 114.3 L-1652.8 4267.8 M1130.9 114.3 L-2351.7 3702.0 M1130.9 114.3 L-2600.2 3442.8 M1130.9 114.3 L-2798.9 3205.7 M1130.9 114.3 L-2958.5 2991.2 M1130.9 114.3 L-3087.6 2798.3 M1130.9 114.3 L-3192.9 2625.2 M1130.9 114.3 L-3279.4 2469.9 M1130.9 114.3 L-3351.2 2330.4 M1130.9 114.3 L-3411.1 2204.7" stroke="#4a4f4a" stroke-opacity="0.098" stroke-width="1.15" fill="none"/><path d="M-399.9 114.3 L3536.0 3197.9 M-399.9 114.3 L3695.2 2983.1 M-399.9 114.3 L3823.8 2790.0 M-399.9 114.3 L3928.7 2617.0 M-399.9 114.3 L4014.8 2461.7 M-399.9 114.3 L4086.1 2322.3 M1130.9 114.3 L-3504.5 1988.5 M1130.9 114.3 L-3541.2 1895.1 M1130.9 114.3 L-3572.8 1810.0 M1130.9 114.3 L-3600.1 1732.3 M1130.9 114.3 L-3623.9 1660.9 M1130.9 114.3 L-3644.7 1595.3" stroke="#4a4f4a" stroke-opacity="0.098" stroke-width="1.15" fill="none"/><path d="M-399.9 114.3 L4145.7 2196.8 M-399.9 114.3 L4195.9 2083.5 M-399.9 114.3 L4238.5 1981.0 M-399.9 114.3 L4306.3 1802.9 M-399.9 114.3 L4333.4 1725.3 M-399.9 114.3 L4357.0 1654.2 M-399.9 114.3 L4377.7 1588.8 M-399.9 114.3 L4395.9 1528.5 M1130.9 114.3 L-3663.1 1534.8 M1130.9 114.3 L-3679.3 1478.9 M1130.9 114.3 L-3693.7 1427.0 M1130.9 114.3 L-3718.1 1333.9 M1130.9 114.3 L-3728.4 1292.0 M1130.9 114.3 L-3737.7 1252.8 M1130.9 114.3 L-3746.2 1216.1 M1130.9 114.3 L-3753.9 1181.6" stroke="#4a4f4a" stroke-opacity="0.069" stroke-width="1.15" fill="none"/><path d="M-399.9 114.3 L4412.0 1472.7 M-399.9 114.3 L4426.3 1421.0 M-399.9 114.3 L4439.0 1373.0 M-399.9 114.3 L4450.4 1328.3 M-399.9 114.3 L4470.0 1247.5 M-399.9 114.3 L4478.3 1210.9 M-399.9 114.3 L4485.9 1176.5 M-399.9 114.3 L4492.8 1144.2 M-399.9 114.3 L4499.1 1113.8 M-399.9 114.3 L4504.9 1085.0 M-399.9 114.3 L4510.2 1057.9 M1130.9 114.3 L-3760.8 1149.1 M1130.9 114.3 L-3767.2 1118.5 M1130.9 114.3 L-3773.0 1089.7 M1130.9 114.3 L-3778.4 1062.4 M1130.9 114.3 L-3787.8 1012.1 M1130.9 114.3 L-3792.0 988.9 M1130.9 114.3 L-3795.9 966.8 M1130.9 114.3 L-3799.5 945.8 M1130.9 114.3 L-3802.8 925.8 M1130.9 114.3 L-3805.9 906.8 M1130.9 114.3 L-3808.8 888.6" stroke="#4a4f4a" stroke-opacity="0.049" stroke-width="1.15" fill="none"/><path d="M-399.9 114.3 L4515.1 1032.1 M-399.9 114.3 L4519.6 1007.8 M-399.9 114.3 L4527.6 962.7 M-399.9 114.3 L4531.1 941.8 M-399.9 114.3 L4534.4 921.9 M-399.9 114.3 L4537.5 902.9 M-399.9 114.3 L4540.3 884.7 M-399.9 114.3 L4543.0 867.4 M-399.9 114.3 L4545.5 850.8 M-399.9 114.3 L4547.8 835.0 M-399.9 114.3 L4550.0 819.8 M-399.9 114.3 L4554.0 791.2 M-399.9 114.3 L4555.8 777.8 M1130.9 114.3 L-3811.5 871.2 M1130.9 114.3 L-3814.0 854.5 M1130.9 114.3 L-3818.6 823.3 M1130.9 114.3 L-3820.6 808.6 M1130.9 114.3 L-3822.6 794.6 M1130.9 114.3 L-3824.4 781.1 M1130.9 114.3 L-3826.2 768.1 M1130.9 114.3 L-3827.8 755.6 M1130.9 114.3 L-3829.3 743.6 M1130.9 114.3 L-3830.8 732.0 M1130.9 114.3 L-3832.2 720.8 M1130.9 114.3 L-3834.7 699.6 M1130.9 114.3 L-3835.9 689.6" stroke="#4a4f4a" stroke-opacity="0.035" stroke-width="1.15" fill="none"/><path d="M-399.9 114.3 L4557.6 764.8 M-399.9 114.3 L4559.2 752.4 M-399.9 114.3 L4560.7 740.4 M-399.9 114.3 L4562.1 728.9 M-399.9 114.3 L4563.5 717.8 M-399.9 114.3 L4564.8 707.0 M-399.9 114.3 L4566.0 696.7 M-399.9 114.3 L4568.3 677.0 M-399.9 114.3 L4569.3 667.7 M-399.9 114.3 L4570.3 658.6 M-399.9 114.3 L4571.3 649.9 M-399.9 114.3 L4572.2 641.4 M-399.9 114.3 L4573.1 633.2 M-399.9 114.3 L4573.9 625.2 M-399.9 114.3 L4574.7 617.5 M-399.9 114.3 L4575.4 610.0 M-399.9 114.3 L4576.8 595.6 M1130.9 114.3 L-3837.0 679.9 M1130.9 114.3 L-3838.1 670.5 M1130.9 114.3 L-3839.1 661.4 M1130.9 114.3 L-3840.0 652.6 M1130.9 114.3 L-3840.9 644.1 M1130.9 114.3 L-3841.8 635.8 M1130.9 114.3 L-3842.7 627.8 M1130.9 114.3 L-3844.2 612.5 M1130.9 114.3 L-3844.9 605.2 M1130.9 114.3 L-3845.6 598.1 M1130.9 114.3 L-3846.3 591.2 M1130.9 114.3 L-3846.9 584.5 M1130.9 114.3 L-3847.5 578.0 M1130.9 114.3 L-3848.1 571.6 M1130.9 114.3 L-3848.7 565.4 M1130.9 114.3 L-3849.2 559.4 M1130.9 114.3 L-3850.3 547.9 M1130.9 114.3 L-3850.7 542.3" stroke="#4a4f4a" stroke-opacity="0.025" stroke-width="1.15" fill="none"/><path d="M-399.9 114.3 L4577.5 588.8 M-399.9 114.3 L4578.1 582.1 M-399.9 114.3 L4578.7 575.6 M-399.9 114.3 L4579.3 569.3 M-399.9 114.3 L4579.9 563.1 M-399.9 114.3 L4580.4 557.2 M-399.9 114.3 L4580.9 551.3 M-399.9 114.3 L4581.4 545.7 M-399.9 114.3 L4582.3 534.7 M-399.9 114.3 L4582.8 529.5 M-399.9 114.3 L4583.2 524.4 M-399.9 114.3 L4583.6 519.4 M-399.9 114.3 L4584.0 514.5 M-399.9 114.3 L4584.4 509.7 M-399.9 114.3 L4584.8 505.1 M-399.9 114.3 L4585.1 500.5 M-399.9 114.3 L4585.5 496.1 M-399.9 114.3 L4586.1 487.5 M-399.9 114.3 L4586.4 483.3 M-399.9 114.3 L4586.7 479.3 M-399.9 114.3 L4587.0 475.3 M-399.9 114.3 L4587.3 471.4 M-399.9 114.3 L4587.6 467.6 M-399.9 114.3 L4587.8 463.9 M1130.9 114.3 L-3851.2 536.9 M1130.9 114.3 L-3851.6 531.6 M1130.9 114.3 L-3852.1 526.5 M1130.9 114.3 L-3852.5 521.4 M1130.9 114.3 L-3852.9 516.5 M1130.9 114.3 L-3853.3 511.8 M1130.9 114.3 L-3853.6 507.1 M1130.9 114.3 L-3854.3 498.0 M1130.9 114.3 L-3854.7 493.7 M1130.9 114.3 L-3855.0 489.4 M1130.9 114.3 L-3855.3 485.2 M1130.9 114.3 L-3855.6 481.2 M1130.9 114.3 L-3855.9 477.2 M1130.9 114.3 L-3856.2 473.3 M1130.9 114.3 L-3856.5 469.5 M1130.9 114.3 L-3856.7 465.7 M1130.9 114.3 L-3857.2 458.5 M1130.9 114.3 L-3857.5 454.9 M1130.9 114.3 L-3857.7 451.5 M1130.9 114.3 L-3857.9 448.1 M1130.9 114.3 L-3858.2 444.8 M1130.9 114.3 L-3858.4 441.6 M1130.9 114.3 L-3858.6 438.4" stroke="#4a4f4a" stroke-opacity="0.018" stroke-width="1.15" fill="none"/><path d="M-399.9 114.3 L4588.1 460.3 M-399.9 114.3 L4588.3 456.7 M-399.9 114.3 L4588.8 449.8 M-399.9 114.3 L4589.0 446.4 M-399.9 114.3 L4589.2 443.1 M-399.9 114.3 L4589.4 439.9 M-399.9 114.3 L4589.6 436.7 M-399.9 114.3 L4589.8 433.6 M-399.9 114.3 L4590.0 430.6 M-399.9 114.3 L4590.2 427.6 M-399.9 114.3 L4590.4 424.7 M-399.9 114.3 L4590.8 419.0 M-399.9 114.3 L4590.9 416.2 M-399.9 114.3 L4591.1 413.5 M-399.9 114.3 L4591.3 410.8 M-399.9 114.3 L4591.4 408.2 M-399.9 114.3 L4591.6 405.6 M-399.9 114.3 L4591.7 403.0 M-399.9 114.3 L4591.9 400.5 M-399.9 114.3 L4592.0 398.1 M-399.9 114.3 L4592.3 393.3 M-399.9 114.3 L4592.4 391.0 M-399.9 114.3 L4592.5 388.7 M-399.9 114.3 L4592.6 386.4 M-399.9 114.3 L4592.8 384.2 M-399.9 114.3 L4592.9 382.0 M-399.9 114.3 L4593.0 379.9 M-399.9 114.3 L4593.1 377.8 M-399.9 114.3 L4593.2 375.7 M1130.9 114.3 L-3858.8 435.3 M1130.9 114.3 L-3859.0 432.2 M1130.9 114.3 L-3859.3 426.3 M1130.9 114.3 L-3859.5 423.4 M1130.9 114.3 L-3859.7 420.5 M1130.9 114.3 L-3859.9 417.8 M1130.9 114.3 L-3860.0 415.0 M1130.9 114.3 L-3860.2 412.3 M1130.9 114.3 L-3860.4 409.7 M1130.9 114.3 L-3860.5 407.1 M1130.9 114.3 L-3860.7 404.5 M1130.9 114.3 L-3860.9 399.6 M1130.9 114.3 L-3861.1 397.2 M1130.9 114.3 L-3861.2 394.8 M1130.9 114.3 L-3861.3 392.4 M1130.9 114.3 L-3861.5 390.1 M1130.9 114.3 L-3861.6 387.9 M1130.9 114.3 L-3861.7 385.6 M1130.9 114.3 L-3861.8 383.4 M1130.9 114.3 L-3862.0 381.3 M1130.9 114.3 L-3862.2 377.1 M1130.9 114.3 L-3862.3 375.0 M1130.9 114.3 L-3862.4 373.0 M1130.9 114.3 L-3862.5 371.0 M1130.9 114.3 L-3862.6 369.0 M1130.9 114.3 L-3862.7 367.1 M1130.9 114.3 L-3862.8 365.2 M1130.9 114.3 L-3862.9 363.3 M1130.9 114.3 L-3863.0 361.5 M1130.9 114.3 L-3863.2 357.9" stroke="#4a4f4a" stroke-opacity="0.013" stroke-width="1.15" fill="none"/><path d="M-399.9 114.3 L4593.4 371.7 M-399.9 114.3 L4593.5 369.7 M-399.9 114.3 L4593.6 367.7 M-399.9 114.3 L4593.7 365.8 M-399.9 114.3 L4593.8 363.9 M-399.9 114.3 L4593.9 362.0 M-399.9 114.3 L4594.0 360.2 M-399.9 114.3 L4594.1 358.4 M-399.9 114.3 L4594.2 356.6 M-399.9 114.3 L4594.3 353.1 M-399.9 114.3 L4594.4 351.4 M-399.9 114.3 L4594.5 349.7 M-399.9 114.3 L4594.6 348.1 M-399.9 114.3 L4594.7 346.4 M-399.9 114.3 L4594.7 344.8 M-399.9 114.3 L4594.8 343.2 M-399.9 114.3 L4594.9 341.6 M-399.9 114.3 L4594.9 340.1 M-399.9 114.3 L4595.1 337.1 M-399.9 114.3 L4595.2 335.6 M-399.9 114.3 L4595.2 334.1 M-399.9 114.3 L4595.3 332.7 M-399.9 114.3 L4595.3 331.2 M-399.9 114.3 L4595.4 329.8 M-399.9 114.3 L4595.5 328.4 M-399.9 114.3 L4595.5 327.0 M-399.9 114.3 L4595.6 325.7 M-399.9 114.3 L4595.7 323.0 M-399.9 114.3 L4595.7 321.7 M-399.9 114.3 L4595.8 320.4 M-399.9 114.3 L4595.9 319.2 M-399.9 114.3 L4595.9 317.9 M-399.9 114.3 L4596.0 316.7 M-399.9 114.3 L4596.0 315.4 M-399.9 114.3 L4596.1 314.2 M-399.9 114.3 L4596.1 313.0 M-399.9 114.3 L4596.2 310.7 M-399.9 114.3 L4596.2 309.5 M-399.9 114.3 L4596.3 308.4 M1130.9 114.3 L-3863.2 356.1 M1130.9 114.3 L-3863.3 354.4 M1130.9 114.3 L-3863.4 352.6 M1130.9 114.3 L-3863.5 351.0 M1130.9 114.3 L-3863.6 349.3 M1130.9 114.3 L-3863.6 347.6 M1130.9 114.3 L-3863.7 346.0 M1130.9 114.3 L-3863.8 344.4 M1130.9 114.3 L-3863.9 341.3 M1130.9 114.3 L-3864.0 339.7 M1130.9 114.3 L-3864.1 338.2 M1130.9 114.3 L-3864.1 336.7 M1130.9 114.3 L-3864.2 335.3 M1130.9 114.3 L-3864.3 333.8 M1130.9 114.3 L-3864.3 332.4 M1130.9 114.3 L-3864.4 330.9 M1130.9 114.3 L-3864.5 329.5 M1130.9 114.3 L-3864.6 326.8 M1130.9 114.3 L-3864.6 325.5 M1130.9 114.3 L-3864.7 324.1 M1130.9 114.3 L-3864.7 322.8 M1130.9 114.3 L-3864.8 321.5 M1130.9 114.3 L-3864.8 320.2 M1130.9 114.3 L-3864.9 319.0 M1130.9 114.3 L-3865.0 317.7 M1130.9 114.3 L-3865.0 316.5 M1130.9 114.3 L-3865.1 314.1 M1130.9 114.3 L-3865.1 312.9 M1130.9 114.3 L-3865.2 311.7 M1130.9 114.3 L-3865.2 310.5 M1130.9 114.3 L-3865.3 309.4 M1130.9 114.3 L-3865.3 308.2 M1130.9 114.3 L-3865.4 307.1 M1130.9 114.3 L-3865.4 306.0 M1130.9 114.3 L-3865.5 304.9 M1130.9 114.3 L-3865.5 302.8 M1130.9 114.3 L-3865.6 301.7 M1130.9 114.3 L-3865.6 300.6 M1130.9 114.3 L-3865.7 299.6" stroke="#4a4f4a" stroke-opacity="0.009" stroke-width="1.15" fill="none"/><path d="M-399.9 114.3 L4596.3 307.2 M-399.9 114.3 L4596.4 306.1 M-399.9 114.3 L4596.4 305.0 M-399.9 114.3 L4596.5 303.9 M-399.9 114.3 L4596.5 302.8 M-399.9 114.3 L4596.5 301.8 M-399.9 114.3 L4596.6 299.7 M-399.9 114.3 L4596.7 298.6 M-399.9 114.3 L4596.7 297.6 M-399.9 114.3 L4596.7 296.6 M-399.9 114.3 L4596.8 295.6 M-399.9 114.3 L4596.8 294.6 M-399.9 114.3 L4596.8 293.6 M-399.9 114.3 L4596.9 292.7 M-399.9 114.3 L4596.9 291.7 M-399.9 114.3 L4597.0 289.8 M-399.9 114.3 L4597.0 288.9 M-399.9 114.3 L4597.0 288.0 M-399.9 114.3 L4597.1 287.1 M-399.9 114.3 L4597.1 286.2 M-399.9 114.3 L4597.1 285.3 M-399.9 114.3 L4597.2 284.4 M-399.9 114.3 L4597.2 283.6 M-399.9 114.3 L4597.2 282.7 M-399.9 114.3 L4597.3 281.0 M-399.9 114.3 L4597.3 280.2 M-399.9 114.3 L4597.3 279.3 M-399.9 114.3 L4597.4 278.5 M-399.9 114.3 L4597.4 277.7 M-399.9 114.3 L4597.4 276.9 M-399.9 114.3 L4597.4 276.1 M-399.9 114.3 L4597.5 275.3 M-399.9 114.3 L4597.5 274.6 M-399.9 114.3 L4597.5 273.0 M-399.9 114.3 L4597.6 272.3 M-399.9 114.3 L4597.6 271.5 M-399.9 114.3 L4597.6 270.8 M-399.9 114.3 L4597.6 270.0 M-399.9 114.3 L4597.6 269.3 M-399.9 114.3 L4597.7 268.6 M-399.9 114.3 L4597.7 267.9 M-399.9 114.3 L4597.7 267.2 M-399.9 114.3 L4597.8 265.8 M-399.9 114.3 L4597.8 265.1 M-399.9 114.3 L4597.8 264.4 M-399.9 114.3 L4597.8 263.7 M-399.9 114.3 L4597.8 263.0 M-399.9 114.3 L4597.9 262.4 M-399.9 114.3 L4597.9 261.7 M-399.9 114.3 L4597.9 261.1 M-399.9 114.3 L4597.9 260.4 M1130.9 114.3 L-3865.7 298.6 M1130.9 114.3 L-3865.7 297.6 M1130.9 114.3 L-3865.8 296.6 M1130.9 114.3 L-3865.8 295.6 M1130.9 114.3 L-3865.8 294.6 M1130.9 114.3 L-3865.9 292.7 M1130.9 114.3 L-3865.9 291.7 M1130.9 114.3 L-3866.0 290.8 M1130.9 114.3 L-3866.0 289.8 M1130.9 114.3 L-3866.0 288.9 M1130.9 114.3 L-3866.1 288.0 M1130.9 114.3 L-3866.1 287.1 M1130.9 114.3 L-3866.1 286.2 M1130.9 114.3 L-3866.2 285.3 M1130.9 114.3 L-3866.2 283.6 M1130.9 114.3 L-3866.3 282.7 M1130.9 114.3 L-3866.3 281.9 M1130.9 114.3 L-3866.3 281.0 M1130.9 114.3 L-3866.3 280.2 M1130.9 114.3 L-3866.4 279.4 M1130.9 114.3 L-3866.4 278.6 M1130.9 114.3 L-3866.4 277.8 M1130.9 114.3 L-3866.4 277.0 M1130.9 114.3 L-3866.5 275.4 M1130.9 114.3 L-3866.5 274.6 M1130.9 114.3 L-3866.5 273.9 M1130.9 114.3 L-3866.6 273.1 M1130.9 114.3 L-3866.6 272.3 M1130.9 114.3 L-3866.6 271.6 M1130.9 114.3 L-3866.6 270.9 M1130.9 114.3 L-3866.7 270.1 M1130.9 114.3 L-3866.7 269.4 M1130.9 114.3 L-3866.7 268.0 M1130.9 114.3 L-3866.8 267.3 M1130.9 114.3 L-3866.8 266.6 M1130.9 114.3 L-3866.8 265.9 M1130.9 114.3 L-3866.8 265.2 M1130.9 114.3 L-3866.8 264.5 M1130.9 114.3 L-3866.9 263.8 M1130.9 114.3 L-3866.9 263.2 M1130.9 114.3 L-3866.9 262.5 M1130.9 114.3 L-3866.9 261.2 M1130.9 114.3 L-3867.0 260.5 M1130.9 114.3 L-3867.0 259.9 M1130.9 114.3 L-3867.0 259.3 M1130.9 114.3 L-3867.0 258.6 M1130.9 114.3 L-3867.0 258.0 M1130.9 114.3 L-3867.0 257.4 M1130.9 114.3 L-3867.1 256.8 M1130.9 114.3 L-3867.1 256.2" stroke="#4a4f4a" stroke-opacity="0.006" stroke-width="1.15" fill="none"/><path d="M-399.9 114.3 L4598.0 259.1 M-399.9 114.3 L4598.0 258.5 M-399.9 114.3 L4598.0 257.9 M-399.9 114.3 L4598.0 257.3 M-399.9 114.3 L4598.0 256.6 M-399.9 114.3 L4598.0 256.0 M-399.9 114.3 L4598.1 255.4 M-399.9 114.3 L4598.1 254.8 M-399.9 114.3 L4598.1 254.2 M-399.9 114.3 L4598.1 253.1 M-399.9 114.3 L4598.1 252.5 M-399.9 114.3 L4598.2 251.9 M-399.9 114.3 L4598.2 251.3 M-399.9 114.3 L4598.2 250.8 M-399.9 114.3 L4598.2 250.2 M-399.9 114.3 L4598.2 249.7 M-399.9 114.3 L4598.2 249.1 M-399.9 114.3 L4598.2 248.6 M-399.9 114.3 L4598.3 247.5 M-399.9 114.3 L4598.3 247.0 M-399.9 114.3 L4598.3 246.4 M-399.9 114.3 L4598.3 245.9 M-399.9 114.3 L4598.3 245.4 M-399.9 114.3 L4598.3 244.9 M-399.9 114.3 L4598.4 244.3 M-399.9 114.3 L4598.4 243.8 M-399.9 114.3 L4598.4 243.3 M-399.9 114.3 L4598.4 242.3 M-399.9 114.3 L4598.4 241.8 M-399.9 114.3 L4598.4 241.4 M-399.9 114.3 L4598.4 240.9 M-399.9 114.3 L4598.5 240.4 M-399.9 114.3 L4598.5 239.9 M-399.9 114.3 L4598.5 239.4 M-399.9 114.3 L4598.5 239.0 M-399.9 114.3 L4598.5 238.5 M-399.9 114.3 L4598.5 237.6 M-399.9 114.3 L4598.5 237.1 M-399.9 114.3 L4598.6 236.7 M-399.9 114.3 L4598.6 236.2 M-399.9 114.3 L4598.6 235.8 M-399.9 114.3 L4598.6 235.3 M-399.9 114.3 L4598.6 234.9 M-399.9 114.3 L4598.6 234.4 M-399.9 114.3 L4598.6 234.0 M-399.9 114.3 L4598.6 233.1 M-399.9 114.3 L4598.6 232.7 M-399.9 114.3 L4598.7 232.3 M-399.9 114.3 L4598.7 231.9 M-399.9 114.3 L4598.7 231.5 M-399.9 114.3 L4598.7 231.1 M-399.9 114.3 L4598.7 230.6 M-399.9 114.3 L4598.7 230.2 M-399.9 114.3 L4598.7 229.8 M-399.9 114.3 L4598.7 229.0 M-399.9 114.3 L4598.7 228.6 M-399.9 114.3 L4598.8 228.2 M-399.9 114.3 L4598.8 227.9 M-399.9 114.3 L4598.8 227.5 M-399.9 114.3 L4598.8 227.1 M-399.9 114.3 L4598.8 226.7 M-399.9 114.3 L4598.8 226.3 M-399.9 114.3 L4598.8 225.9 M-399.9 114.3 L4598.8 225.2 M1130.9 114.3 L-3867.1 255.0 M1130.9 114.3 L-3867.1 254.4 M1130.9 114.3 L-3867.1 253.8 M1130.9 114.3 L-3867.2 253.2 M1130.9 114.3 L-3867.2 252.6 M1130.9 114.3 L-3867.2 252.1 M1130.9 114.3 L-3867.2 251.5 M1130.9 114.3 L-3867.2 250.9 M1130.9 114.3 L-3867.2 250.4 M1130.9 114.3 L-3867.3 249.3 M1130.9 114.3 L-3867.3 248.7 M1130.9 114.3 L-3867.3 248.2 M1130.9 114.3 L-3867.3 247.7 M1130.9 114.3 L-3867.3 247.1 M1130.9 114.3 L-3867.3 246.6 M1130.9 114.3 L-3867.4 246.1 M1130.9 114.3 L-3867.4 245.6 M1130.9 114.3 L-3867.4 245.0 M1130.9 114.3 L-3867.4 244.0 M1130.9 114.3 L-3867.4 243.5 M1130.9 114.3 L-3867.4 243.0 M1130.9 114.3 L-3867.4 242.5 M1130.9 114.3 L-3867.5 242.0 M1130.9 114.3 L-3867.5 241.5 M1130.9 114.3 L-3867.5 241.1 M1130.9 114.3 L-3867.5 240.6 M1130.9 114.3 L-3867.5 240.1 M1130.9 114.3 L-3867.5 239.2 M1130.9 114.3 L-3867.5 238.7 M1130.9 114.3 L-3867.6 238.2 M1130.9 114.3 L-3867.6 237.8 M1130.9 114.3 L-3867.6 237.3 M1130.9 114.3 L-3867.6 236.9 M1130.9 114.3 L-3867.6 236.4 M1130.9 114.3 L-3867.6 236.0 M1130.9 114.3 L-3867.6 235.5 M1130.9 114.3 L-3867.6 234.6 M1130.9 114.3 L-3867.7 234.2 M1130.9 114.3 L-3867.7 233.8 M1130.9 114.3 L-3867.7 233.3 M1130.9 114.3 L-3867.7 232.9 M1130.9 114.3 L-3867.7 232.5 M1130.9 114.3 L-3867.7 232.1 M1130.9 114.3 L-3867.7 231.7 M1130.9 114.3 L-3867.7 231.3 M1130.9 114.3 L-3867.7 230.4 M1130.9 114.3 L-3867.8 230.0 M1130.9 114.3 L-3867.8 229.6 M1130.9 114.3 L-3867.8 229.2 M1130.9 114.3 L-3867.8 228.8 M1130.9 114.3 L-3867.8 228.5 M1130.9 114.3 L-3867.8 228.1 M1130.9 114.3 L-3867.8 227.7 M1130.9 114.3 L-3867.8 227.3 M1130.9 114.3 L-3867.8 226.5 M1130.9 114.3 L-3867.8 226.1 M1130.9 114.3 L-3867.8 225.8 M1130.9 114.3 L-3867.9 225.4 M1130.9 114.3 L-3867.9 225.0 M1130.9 114.3 L-3867.9 224.7 M1130.9 114.3 L-3867.9 224.3 M1130.9 114.3 L-3867.9 223.9 M1130.9 114.3 L-3867.9 223.6 M1130.9 114.3 L-3867.9 222.9 M1130.9 114.3 L-3867.9 222.5 M1130.9 114.3 L-3867.9 222.2" stroke="#4a4f4a" stroke-opacity="0.005" stroke-width="1.15" fill="none"/><path d="M-399.9 114.3 L4598.8 224.8 M-399.9 114.3 L4598.8 224.5 M-399.9 114.3 L4598.8 224.1 M-399.9 114.3 L4598.9 223.7 M-399.9 114.3 L4598.9 223.4 M-399.9 114.3 L4598.9 223.0 M-399.9 114.3 L4598.9 222.6 M-399.9 114.3 L4598.9 222.3 M-399.9 114.3 L4598.9 221.6 M-399.9 114.3 L4598.9 221.2 M-399.9 114.3 L4598.9 220.9 M-399.9 114.3 L4598.9 220.6 M-399.9 114.3 L4598.9 220.2 M-399.9 114.3 L4598.9 219.9 M-399.9 114.3 L4598.9 219.5 M-399.9 114.3 L4598.9 219.2 M-399.9 114.3 L4599.0 218.9 M-399.9 114.3 L4599.0 218.2 M-399.9 114.3 L4599.0 217.9 M-399.9 114.3 L4599.0 217.6 M-399.9 114.3 L4599.0 217.3 M-399.9 114.3 L4599.0 216.9 M-399.9 114.3 L4599.0 216.6 M-399.9 114.3 L4599.0 216.3 M-399.9 114.3 L4599.0 216.0 M-399.9 114.3 L4599.0 215.7 M-399.9 114.3 L4599.0 215.1 M-399.9 114.3 L4599.0 214.8 M-399.9 114.3 L4599.0 214.5 M-399.9 114.3 L4599.1 214.2 M-399.9 114.3 L4599.1 213.9 M-399.9 114.3 L4599.1 213.6 M-399.9 114.3 L4599.1 213.3 M-399.9 114.3 L4599.1 213.0 M-399.9 114.3 L4599.1 212.7 M-399.9 114.3 L4599.1 212.1 M-399.9 114.3 L4599.1 211.8 M-399.9 114.3 L4599.1 211.5 M-399.9 114.3 L4599.1 211.2 M-399.9 114.3 L4599.1 210.9 M-399.9 114.3 L4599.1 210.7 M-399.9 114.3 L4599.1 210.4 M-399.9 114.3 L4599.1 210.1 M-399.9 114.3 L4599.1 209.8 M-399.9 114.3 L4599.1 209.3 M-399.9 114.3 L4599.2 209.0 M-399.9 114.3 L4599.2 208.7 M-399.9 114.3 L4599.2 208.5 M-399.9 114.3 L4599.2 208.2 M-399.9 114.3 L4599.2 207.9 M-399.9 114.3 L4599.2 207.7 M-399.9 114.3 L4599.2 207.4 M-399.9 114.3 L4599.2 207.2 M-399.9 114.3 L4599.2 206.6 M-399.9 114.3 L4599.2 206.4 M-399.9 114.3 L4599.2 206.1 M-399.9 114.3 L4599.2 205.9 M-399.9 114.3 L4599.2 205.6 M-399.9 114.3 L4599.2 205.4 M-399.9 114.3 L4599.2 205.1 M-399.9 114.3 L4599.2 204.9 M-399.9 114.3 L4599.2 204.6 M-399.9 114.3 L4599.2 204.1 M-399.9 114.3 L4599.2 203.9 M-399.9 114.3 L4599.3 203.6 M-399.9 114.3 L4599.3 203.4 M-399.9 114.3 L4599.3 203.2 M-399.9 114.3 L4599.3 202.9 M-399.9 114.3 L4599.3 202.7 M-399.9 114.3 L4599.3 202.5 M-399.9 114.3 L4599.3 202.2 M-399.9 114.3 L4599.3 201.8 M-399.9 114.3 L4599.3 201.5 M-399.9 114.3 L4599.3 201.3 M-399.9 114.3 L4599.3 201.1 M-399.9 114.3 L4599.3 200.8 M-399.9 114.3 L4599.3 200.6 M-399.9 114.3 L4599.3 200.4 M-399.9 114.3 L4599.3 200.2 M-399.9 114.3 L4599.3 199.9 M-399.9 114.3 L4599.3 199.5 M-399.9 114.3 L4599.3 199.3 M-399.9 114.3 L4599.3 199.1 M-399.9 114.3 L4599.3 198.9 M-399.9 114.3 L4599.3 198.6 M-399.9 114.3 L4599.3 198.4 M1130.9 114.3 L-3867.9 221.8 M1130.9 114.3 L-3867.9 221.5 M1130.9 114.3 L-3867.9 221.1 M1130.9 114.3 L-3868.0 220.8 M1130.9 114.3 L-3868.0 220.4 M1130.9 114.3 L-3868.0 220.1 M1130.9 114.3 L-3868.0 219.4 M1130.9 114.3 L-3868.0 219.1 M1130.9 114.3 L-3868.0 218.8 M1130.9 114.3 L-3868.0 218.5 M1130.9 114.3 L-3868.0 218.1 M1130.9 114.3 L-3868.0 217.8 M1130.9 114.3 L-3868.0 217.5 M1130.9 114.3 L-3868.0 217.2 M1130.9 114.3 L-3868.0 216.8 M1130.9 114.3 L-3868.1 216.2 M1130.9 114.3 L-3868.1 215.9 M1130.9 114.3 L-3868.1 215.6 M1130.9 114.3 L-3868.1 215.3 M1130.9 114.3 L-3868.1 215.0 M1130.9 114.3 L-3868.1 214.7 M1130.9 114.3 L-3868.1 214.4 M1130.9 114.3 L-3868.1 214.1 M1130.9 114.3 L-3868.1 213.8 M1130.9 114.3 L-3868.1 213.2 M1130.9 114.3 L-3868.1 212.9 M1130.9 114.3 L-3868.1 212.6 M1130.9 114.3 L-3868.1 212.3 M1130.9 114.3 L-3868.1 212.0 M1130.9 114.3 L-3868.1 211.7 M1130.9 114.3 L-3868.1 211.5 M1130.9 114.3 L-3868.2 211.2 M1130.9 114.3 L-3868.2 210.9 M1130.9 114.3 L-3868.2 210.3 M1130.9 114.3 L-3868.2 210.1 M1130.9 114.3 L-3868.2 209.8 M1130.9 114.3 L-3868.2 209.5 M1130.9 114.3 L-3868.2 209.2 M1130.9 114.3 L-3868.2 209.0 M1130.9 114.3 L-3868.2 208.7 M1130.9 114.3 L-3868.2 208.4 M1130.9 114.3 L-3868.2 208.2 M1130.9 114.3 L-3868.2 207.6 M1130.9 114.3 L-3868.2 207.4 M1130.9 114.3 L-3868.2 207.1 M1130.9 114.3 L-3868.2 206.9 M1130.9 114.3 L-3868.2 206.6 M1130.9 114.3 L-3868.2 206.4 M1130.9 114.3 L-3868.2 206.1 M1130.9 114.3 L-3868.3 205.8 M1130.9 114.3 L-3868.3 205.6 M1130.9 114.3 L-3868.3 205.1 M1130.9 114.3 L-3868.3 204.9 M1130.9 114.3 L-3868.3 204.6 M1130.9 114.3 L-3868.3 204.4 M1130.9 114.3 L-3868.3 204.1 M1130.9 114.3 L-3868.3 203.9 M1130.9 114.3 L-3868.3 203.6 M1130.9 114.3 L-3868.3 203.4 M1130.9 114.3 L-3868.3 203.2 M1130.9 114.3 L-3868.3 202.7 M1130.9 114.3 L-3868.3 202.5 M1130.9 114.3 L-3868.3 202.2 M1130.9 114.3 L-3868.3 202.0 M1130.9 114.3 L-3868.3 201.8 M1130.9 114.3 L-3868.3 201.5 M1130.9 114.3 L-3868.3 201.3 M1130.9 114.3 L-3868.3 201.1 M1130.9 114.3 L-3868.3 200.8 M1130.9 114.3 L-3868.3 200.4 M1130.9 114.3 L-3868.4 200.2 M1130.9 114.3 L-3868.4 200.0 M1130.9 114.3 L-3868.4 199.7 M1130.9 114.3 L-3868.4 199.5 M1130.9 114.3 L-3868.4 199.3 M1130.9 114.3 L-3868.4 199.1 M1130.9 114.3 L-3868.4 198.9 M1130.9 114.3 L-3868.4 198.7 M1130.9 114.3 L-3868.4 198.2 M1130.9 114.3 L-3868.4 198.0 M1130.9 114.3 L-3868.4 197.8 M1130.9 114.3 L-3868.4 197.6 M1130.9 114.3 L-3868.4 197.4 M1130.9 114.3 L-3868.4 197.2 M1130.9 114.3 L-3868.4 197.0 M1130.9 114.3 L-3868.4 196.8" stroke="#4a4f4a" stroke-opacity="0.003" stroke-width="1.15" fill="none"/><path d="M-399.9 114.3 L4599.3 198.2 M-399.9 114.3 L4599.3 198.0 M-399.9 114.3 L4599.4 197.8 M-399.9 114.3 L4599.4 197.4 M-399.9 114.3 L4599.4 197.2 M-399.9 114.3 L4599.4 197.0 M-399.9 114.3 L4599.4 196.7 M-399.9 114.3 L4599.4 196.5 M-399.9 114.3 L4599.4 196.3 M-399.9 114.3 L4599.4 196.1 M-399.9 114.3 L4599.4 195.9 M-399.9 114.3 L4599.4 195.7 M1130.9 114.3 L-3868.4 196.6 M1130.9 114.3 L-3868.4 196.2 M1130.9 114.3 L-3868.4 196.0 M1130.9 114.3 L-3868.4 195.8 M1130.9 114.3 L-3868.4 195.6 M1130.9 114.3 L-3868.4 195.4 M1130.9 114.3 L-3868.4 195.2 M1130.9 114.3 L-3868.4 195.0 M1130.9 114.3 L-3868.4 194.8 M1130.9 114.3 L-3868.4 194.6" stroke="#4a4f4a" stroke-opacity="0.002" stroke-width="1.15" fill="none"/><path d="M-399.9 114.3 L-4822.4 2447.1 M-399.9 114.3 L-2197.2 4780.1 M1130.9 114.3 L3948.4 4244.9 M1130.9 114.3 L-2040.6 3979.8" stroke="#3e423e" stroke-opacity="0.400" stroke-width="1" fill="none"/><path d="M-399.9 114.3 L3337.7 3435.5 M1130.9 114.3 L-3461.7 2091.3" stroke="#3e423e" stroke-opacity="0.400" stroke-width="1" fill="none"/><path d="M-399.9 114.3 L4274.9 1887.8 M1130.9 114.3 L-3706.6 1378.8" stroke="#3e423e" stroke-opacity="0.277" stroke-width="1" fill="none"/><path d="M-399.9 114.3 L4460.7 1286.5 M1130.9 114.3 L-3783.3 1036.6" stroke="#3e423e" stroke-opacity="0.192" stroke-width="1" fill="none"/><path d="M-399.9 114.3 L4523.7 984.7 M-399.9 114.3 L4552.1 805.2 M1130.9 114.3 L-3816.4 838.6 M1130.9 114.3 L-3833.5 710.0" stroke="#3e423e" stroke-opacity="0.133" stroke-width="1" fill="none"/><path d="M-399.9 114.3 L4567.2 686.7 M-399.9 114.3 L4576.1 602.7 M1130.9 114.3 L-3843.4 620.0 M1130.9 114.3 L-3849.8 553.6" stroke="#3e423e" stroke-opacity="0.092" stroke-width="1" fill="none"/><path d="M-399.9 114.3 L4581.9 540.1 M-399.9 114.3 L4585.8 491.7 M1130.9 114.3 L-3854.0 502.5 M1130.9 114.3 L-3857.0 462.1" stroke="#3e423e" stroke-opacity="0.064" stroke-width="1" fill="none"/><path d="M-399.9 114.3 L4588.6 453.2 M-399.9 114.3 L4590.6 421.8 M-399.9 114.3 L4592.1 395.7 M-399.9 114.3 L4593.3 373.7 M1130.9 114.3 L-3859.2 429.2 M1130.9 114.3 L-3860.8 402.0 M1130.9 114.3 L-3862.1 379.2 M1130.9 114.3 L-3863.1 359.7" stroke="#3e423e" stroke-opacity="0.044" stroke-width="1" fill="none"/><path d="M-399.9 114.3 L4594.3 354.8 M-399.9 114.3 L4595.0 338.6 M-399.9 114.3 L4595.6 324.3 M-399.9 114.3 L4596.1 311.8 M1130.9 114.3 L-3863.9 342.8 M1130.9 114.3 L-3864.5 328.2 M1130.9 114.3 L-3865.1 315.3 M1130.9 114.3 L-3865.5 303.8" stroke="#3e423e" stroke-opacity="0.031" stroke-width="1" fill="none"/><path d="M-399.9 114.3 L4596.6 300.7 M-399.9 114.3 L4596.9 290.8 M-399.9 114.3 L4597.2 281.9 M-399.9 114.3 L4597.5 273.8 M-399.9 114.3 L4597.7 266.5 M1130.9 114.3 L-3865.9 293.6 M1130.9 114.3 L-3866.2 284.5 M1130.9 114.3 L-3866.5 276.2 M1130.9 114.3 L-3866.7 268.7 M1130.9 114.3 L-3866.9 261.8 M1130.9 114.3 L-3867.1 255.6" stroke="#3e423e" stroke-opacity="0.021" stroke-width="1" fill="none"/><path d="M-399.9 114.3 L4597.9 259.8 M-399.9 114.3 L4598.1 253.7 M-399.9 114.3 L4598.3 248.0 M-399.9 114.3 L4598.4 242.8 M-399.9 114.3 L4598.5 238.0 M-399.9 114.3 L4598.6 233.6 M-399.9 114.3 L4598.7 229.4 M-399.9 114.3 L4598.8 225.6 M1130.9 114.3 L-3867.3 249.8 M1130.9 114.3 L-3867.4 244.5 M1130.9 114.3 L-3867.5 239.6 M1130.9 114.3 L-3867.6 235.1 M1130.9 114.3 L-3867.7 230.8 M1130.9 114.3 L-3867.8 226.9 M1130.9 114.3 L-3867.9 223.2" stroke="#3e423e" stroke-opacity="0.015" stroke-width="1" fill="none"/><path d="M-399.9 114.3 L4598.9 221.9 M-399.9 114.3 L4599.0 218.6 M-399.9 114.3 L4599.0 215.4 M-399.9 114.3 L4599.1 212.4 M-399.9 114.3 L4599.1 209.6 M-399.9 114.3 L4599.2 206.9 M-399.9 114.3 L4599.2 204.4 M-399.9 114.3 L4599.3 202.0 M-399.9 114.3 L4599.3 199.7 M1130.9 114.3 L-3868.0 219.8 M1130.9 114.3 L-3868.0 216.5 M1130.9 114.3 L-3868.1 213.5 M1130.9 114.3 L-3868.2 210.6 M1130.9 114.3 L-3868.2 207.9 M1130.9 114.3 L-3868.3 205.3 M1130.9 114.3 L-3868.3 202.9 M1130.9 114.3 L-3868.3 200.6 M1130.9 114.3 L-3868.4 198.4" stroke="#3e423e" stroke-opacity="0.010" stroke-width="1" fill="none"/><path d="M-399.9 114.3 L4599.4 197.6 M1130.9 114.3 L-3868.4 196.4" stroke="#3e423e" stroke-opacity="0.007" stroke-width="1" fill="none"/><path d="M1130.9 114.3 L-3461.7 2091.3 M-399.9 114.3 L3337.7 3435.5" stroke="#3a3d3a" stroke-opacity="0.5" stroke-width="1.1" fill="none"/></g></svg>
<svg class="a" style="left:820px;top:430px" width="360" height="230" viewBox="0 0 1642 1049"><defs><linearGradient id="lwg" x1="0" y1="0" x2="0" y2="1"><stop offset="0" stop-color="#3a4458"/><stop offset="0.5" stop-color="#2a3347"/><stop offset="1" stop-color="#141a26"/></linearGradient><linearGradient id="rwg" x1="0" y1="0" x2="0" y2="1"><stop offset="0" stop-color="#2c3548"/><stop offset="0.45" stop-color="#222a3b"/><stop offset="1" stop-color="#0a0d14"/></linearGradient><linearGradient id="finA" x1="0" y1="0" x2="1" y2="0"><stop offset="0" stop-color="#030407"/><stop offset="0.7" stop-color="#0e1219"/><stop offset="1" stop-color="#262a33"/></linearGradient><linearGradient id="finB" x1="0" y1="1" x2="1" y2="0"><stop offset="0" stop-color="#08090c"/><stop offset="0.75" stop-color="#17191e"/><stop offset="1" stop-color="#3d3f44"/></linearGradient><linearGradient id="intk" x1="0" y1="0" x2="0.2" y2="1"><stop offset="0" stop-color="#2c364a"/><stop offset="0.5" stop-color="#161c28"/><stop offset="1" stop-color="#06080c"/></linearGradient><linearGradient id="fusg" x1="0.25" y1="0.1" x2="0.5" y2="1"><stop offset="0" stop-color="#222a3a"/><stop offset="0.25" stop-color="#0f141e"/><stop offset="0.5" stop-color="#040508"/><stop offset="1" stop-color="#000000"/></linearGradient><filter id="blur1" x="-10%" y="-10%" width="120%" height="120%"><feGaussianBlur stdDeviation="4"/></filter></defs><g opacity="0.9" filter="url(#blur1)"><path d="M415 399 L661 366 L694 374 L805 416 L700 470 L440 560 L324 604 L384 571 Z" fill="#d9bb8e" stroke="#d9bb8e" stroke-width="17" stroke-linejoin="round"/><path d="M1000 610 L1222 562 L1581 665 L1548 818 L775 831 L760 770 Z" fill="#d9bb8e" stroke="#d9bb8e" stroke-width="17" stroke-linejoin="round"/><path d="M324 604 C380 575 440 560 440 560 C520 525 605 493 605 493 L771 432 L882 394 L992 363 L1037 366 C1060 375 1080 390 1089 393 L1205 426 L1150 520 L700 700 L330 660 Z" fill="#d9bb8e" stroke="#d9bb8e" stroke-width="17" stroke-linejoin="round"/><path d="M64 922 C95 850 190 750 321 662 C360 640 410 623 410 623 L520 585 L631 546 L826 477 L992 438 L1103 416 L1205 426 C1230 440 1246 459 1246 459 C1258 490 1259 508 1259 508 C1255 530 1238 550 1238 550 L1222 562 L941 674 L775 764 L786 833 L603 806 L548 828 C480 860 410 878 410 878 C330 905 244 933 244 933 C180 945 95 952 95 952 C70 950 58 938 64 922 Z" fill="#d9bb8e" stroke="#d9bb8e" stroke-width="17" stroke-linejoin="round"/><path d="M883 70 L974 128 L1023 360 L866 409 Z" fill="#d9bb8e" stroke="#d9bb8e" stroke-width="17" stroke-linejoin="round"/><path d="M1065 475 L1308 170 L1333 211 L1213 417 L1120 480 Z" fill="#d9bb8e" stroke="#d9bb8e" stroke-width="17" stroke-linejoin="round"/><path d="M548 828 C560 850 600 875 659 894 C700 900 741 889 741 889 C770 878 786 856 786 856 L786 833 L603 806 Z" fill="#d9bb8e" stroke="#d9bb8e" stroke-width="17" stroke-linejoin="round"/></g><path d="M415 399 L661 366 L694 374 L805 416 L700 470 L440 560 L324 604 L384 571 Z" fill="url(#lwg)" /><path d="M1000 610 L1222 562 L1581 665 L1548 818 L775 831 L760 770 Z" fill="url(#rwg)" /><path d="M883 70 L974 128 L1023 360 L866 409 Z" fill="url(#finA)" /><path d="M1065 475 L1308 170 L1333 211 L1213 417 L1120 480 Z" fill="url(#finB)" /><path d="M324 604 C380 575 440 560 440 560 C520 525 605 493 605 493 L771 432 L882 394 L992 363 L1037 366 C1060 375 1080 390 1089 393 L1205 426 L1150 520 L700 700 L330 660 Z" fill="url(#intk)" /><path d="M64 922 C95 850 190 750 321 662 C360 640 410 623 410 623 L520 585 L631 546 L826 477 L992 438 L1103 416 L1205 426 C1230 440 1246 459 1246 459 C1258 490 1259 508 1259 508 C1255 530 1238 550 1238 550 L1222 562 L941 674 L775 764 L786 833 L603 806 L548 828 C480 860 410 878 410 878 C330 905 244 933 244 933 C180 945 95 952 95 952 C70 950 58 938 64 922 Z" fill="url(#fusg)" /><path d="M548 828 C560 850 600 875 659 894 C700 900 741 889 741 889 C770 878 786 856 786 856 L786 833 L603 806 Z" fill="#050608" /><path d="M329 653 C400 615 460 590 495 582 L661 521 L827 477 L992 438 L1103 416" fill="none" stroke="#8a96ac" stroke-width="5" opacity="0.55"/><path d="M324 604 C380 575 440 560 440 560 C520 525 605 493 605 493 L771 432 L882 394 L992 363 L1037 366" fill="none" stroke="#6b7890" stroke-width="4" opacity="0.5"/><path d="M1205 426 C1230 440 1246 459 1246 459 C1258 490 1259 508 1259 508 C1255 530 1238 550 1238 550" fill="none" stroke="#8d8f94" stroke-width="16" opacity="0.6"/><path d="M1015 364 C1050 372 1080 388 1089 393" fill="none" stroke="#6a7080" stroke-width="10" opacity="0.5"/><path d="M537 723 L614 750" stroke="#3a4050" stroke-width="4" opacity="0.7"/><path d="M681 817 L681 701 C640 705 595 760 587 833 Z" fill="#d5312a"/><path d="M681 817 L681 701 C730 705 775 770 780 833 Z" fill="#6d8ddc"/><path d="M681 817 L587 833 C600 870 640 889 681 889 C725 889 770 865 780 833 Z" fill="#52c43e"/><path d="M449 911 C440 760 540 580 681 532" fill="none" stroke="#e33a2f" stroke-width="14"/><path d="M694 532 C840 580 925 740 922 911" fill="none" stroke="#7193e4" stroke-width="14"/><path d="M465 938 C560 985 820 990 915 935" fill="none" stroke="#62e04c" stroke-width="15"/><path d="M681 817 L681 520" stroke="#62e04c" stroke-width="12"/><path d="M648 525 L686 388 L718 525 Z" fill="#62e04c"/><path d="M681 817 L450 925" stroke="#7193e4" stroke-width="12"/><path d="M341 977 L440 900 L470 955 Z" fill="#7193e4"/><path d="M681 817 L915 925" stroke="#e33a2f" stroke-width="12"/><path d="M905 895 L1035 980 L910 962 Z" fill="#e33a2f"/></svg>
<div class="a" style="left:605px;top:946px;width:728px;height:29px;background:#1f1f1f;"></div>
<svg class="a" style="left:615px;top:953px;" width="16" height="15" viewBox="0 0 16 15"><rect x="0.7" y="0.7" width="14.3" height="13.3" rx="1.8" fill="none" stroke="#d8d8d8" stroke-width="1.2"/><path d="M5.3 0.7 V14" stroke="#d8d8d8" stroke-width="1.2"/></svg>
<svg class="a" style="left:643.5px;top:955px;" width="15" height="11" viewBox="0 0 15 11"><rect x="0.5" y="1.5" width="9" height="8" rx="1.2" fill="#d8d8d8"/><path d="M10 4.5 L14 2 V9 L10 6.5 Z" fill="#d8d8d8"/></svg>
<div class="t r" style="left:663px;top:952.34px;font-size:12px;line-height:17px;color:#eeeeee;font-weight:400;letter-spacing:-0.1px;">Perspective</div>
<svg class="a" style="left:951px;top:952px;" width="16" height="16" viewBox="0 0 16 16"><path d="M2.5 1.8 L14 8 L2.5 14.2 Z" fill="none" stroke="#d8d8d8" stroke-width="1.3" stroke-linejoin="round"/></svg>
<svg class="a" style="left:1186px;top:951px;" width="17" height="18" viewBox="0 0 17 18"><circle cx="8.5" cy="7.5" r="3.6" fill="none" stroke="#3f7fe6" stroke-width="1.3"/><path d="M7 11.5 V14.5 H10 V11.5" fill="none" stroke="#3f7fe6" stroke-width="1.2"/><path d="M8.5 1 V2.3 M2 7.5 H3.3 M13.7 7.5 H15 M3.8 2.8 L4.7 3.7 M13.2 2.8 L12.3 3.7 M3.8 12.2 L4.7 11.3 M13.2 12.2 L12.3 11.3" stroke="#3f7fe6" stroke-width="1.1"/></svg>
<svg class="a" style="left:1208px;top:955px;" width="17" height="11" viewBox="0 0 17 11"><ellipse cx="8.5" cy="5.5" rx="7.3" ry="4.3" fill="none" stroke="#d8d8d8" stroke-width="1.2"/></svg>
<svg class="a" style="left:1238px;top:953px;" width="13" height="14" viewBox="0 0 13 14"><path d="M6.5 1.5 V8 L1.5 12.5 M6.5 8 L11.5 12.5" fill="none" stroke="#d8d8d8" stroke-width="1.4" stroke-linecap="round"/></svg>
<svg class="a" style="left:1255px;top:954px;" width="17" height="13" viewBox="0 0 17 13"><rect x="0.7" y="0.7" width="15.3" height="11.3" rx="1" fill="none" stroke="#d8d8d8" stroke-width="1.2"/><path d="M3 3 L4.5 3 M3 3 V4.5 M14 10 H12.5 M14 10 V8.5" stroke="#d8d8d8" stroke-width="1.1"/></svg>
<svg class="a" style="left:1285px;top:954px;" width="18" height="13" viewBox="0 0 18 13"><path d="M1 6.5 Q9 -1.5 17 6.5 Q9 14.5 1 6.5 Z" fill="none" stroke="#d8d8d8" stroke-width="1.3"/><circle cx="9" cy="6.5" r="2.3" fill="none" stroke="#d8d8d8" stroke-width="1.3"/></svg>
<svg class="a" style="left:1313px;top:953.5px;" width="14" height="14" viewBox="0 0 14 14"><rect x="0.7" y="0.7" width="12.6" height="12.6" rx="1.6" fill="none" stroke="#d8d8d8" stroke-width="1.2"/><path d="M0.7 9 H13.3" stroke="#d8d8d8" stroke-width="1.2"/></svg>
<div class="a" style="left:330px;top:133px;width:275px;height:1px;background:#423e42;"></div>
<div class="a" style="left:604px;top:133px;width:729px;height:1px;background:#1d1c20;"></div>
<div class="a" style="left:604px;top:133px;width:1.5px;height:813px;background:#1d1c20;"></div>
<div class="a" style="left:605.5px;top:134px;width:727px;height:1px;background:rgba(255,255,255,0.35);"></div>
<div class="a" style="left:605.5px;top:134px;width:1px;height:812px;background:rgba(255,255,255,0.3);"></div>
<div class="a" style="left:1333px;top:38px;width:2px;height:937px;background:#1a181a;"></div>
<div class="a" style="left:1335px;top:38px;width:260px;height:937px;background:#251f23;"></div>
<div class="a" style="left:1335px;top:76px;width:260px;height:1px;background:#3a3538;"></div>
<div class="a" style="left:1335px;top:104px;width:260px;height:1px;background:#3a3538;"></div>
<svg class="a" style="left:1561px;top:50px;" width="20" height="15" viewBox="0 0 20 15"><rect x="0.7" y="0.7" width="18.3" height="13.3" rx="2" fill="none" stroke="#d0cdd0" stroke-width="1.3"/><path d="M13 0.7 V14" stroke="#d0cdd0" stroke-width="1.3"/><path d="M15.2 3.5 H17 M15.2 5.5 H17 M15.2 7.5 H17" stroke="#d0cdd0" stroke-width="0.9"/></svg>
<svg class="a" style="left:1352.5px;top:83.5px;" width="13" height="15" viewBox="0 0 13 15"><path d="M1.6 2.2 Q1.6 1.2 2.6 1.2 L7.6 1.2 L11.6 5.2 L11.6 12.8 Q11.6 13.8 10.6 13.8 L2.6 13.8 Q1.6 13.8 1.6 12.8 Z M7.6 1.2 V5.2 H11.6" fill="none" stroke="#c2bfc2" stroke-width="1.2" stroke-linecap="round" stroke-linejoin="round"/></svg>
<svg class="a" style="left:1381.5px;top:83.5px;" width="14" height="14" viewBox="0 0 14 14"><circle cx="7" cy="7" r="6.1" fill="none" stroke="#c2bfc2" stroke-width="1.2" stroke-linecap="round" stroke-linejoin="round"/><path d="M7 3.6 V7.2 L4.6 8.6" fill="none" stroke="#c2bfc2" stroke-width="1.2" stroke-linecap="round" stroke-linejoin="round"/></svg>
<svg class="a" style="left:1411.5px;top:83.5px;" width="14" height="14" viewBox="0 0 14 14"><circle cx="7" cy="7" r="6.1" fill="none" stroke="#c2bfc2" stroke-width="1.2" stroke-linecap="round" stroke-linejoin="round"/><path d="M5.2 5.6 Q5.2 3.8 7 3.8 Q8.8 3.8 8.8 5.5 Q8.8 6.7 7 7.4 V8.3" fill="none" stroke="#c2bfc2" stroke-width="1.2" stroke-linecap="round" stroke-linejoin="round"/><circle cx="7" cy="10.3" r="0.7" fill="#c2bfc2"/></svg>
<svg class="a" style="left:1441.5px;top:83.5px;" width="14" height="15" viewBox="0 0 14 15"><path d="M7 1 L12.8 4.2 L12.8 10.8 L7 14 L1.2 10.8 L1.2 4.2 Z M1.2 4.2 L7 7.4 L12.8 4.2 M7 7.4 V14" fill="none" stroke="#c2bfc2" stroke-width="1.2" stroke-linecap="round" stroke-linejoin="round"/></svg>
<svg class="a" style="left:1471.5px;top:83.5px;" width="15" height="15" viewBox="0 0 15 15"><path d="M1 3.2 H14 M1 7.5 H14 M1 11.8 H14 M10.5 1.2 L13 3.2 L10.5 5.2 M4.5 5.5 L2 7.5 L4.5 9.5 M10.5 9.8 L13 11.8 L10.5 13.8" fill="none" stroke="#c2bfc2" stroke-width="1.2" stroke-linecap="round" stroke-linejoin="round"/></svg>
<svg class="a" style="left:1501.5px;top:83.5px;" width="15" height="15" viewBox="0 0 15 15"><circle cx="7.5" cy="7.5" r="6.8" fill="#2f7bf5"/><path d="M5.3 4.2 Q8.5 4.6 10 7.6" fill="none" stroke="#16366e" stroke-width="1.4" stroke-linecap="round"/></svg>
<svg class="a" style="left:1532.5px;top:83.5px;" width="12" height="15" viewBox="0 0 12 15"><path d="M2 3.2 Q2 1.2 6 1.2 Q10 1.2 10 3.2 Q10 5 6 5.2 Q2 5.4 2 7.4 Q2 9.4 6 9.6 Q10 9.8 10 11.6 Q10 13.8 6 13.8 Q2 13.8 2 11.8" fill="none" stroke="#c2bfc2" stroke-width="1.2" stroke-linecap="round" stroke-linejoin="round"/><path d="M2 3.2 Q3 4.6 6 5.2 M10 7.4 Q9 9 6 9.6" fill="none" stroke="#c2bfc2" stroke-width="1.2" stroke-linecap="round" stroke-linejoin="round" stroke-width="1"/></svg>
<svg class="a" style="left:1561.5px;top:83.5px;" width="16" height="15" viewBox="0 0 16 15"><path d="M1 13.2 L6.3 2 L10.6 10.4 M9.2 13.2 L11.9 9.2 L14.8 13.2 Z M1 13.2 H14.8" fill="none" stroke="#c2bfc2" stroke-width="1.2" stroke-linecap="round" stroke-linejoin="round"/></svg>
<div class="a" style="left:1578px;top:104px;width:1px;height:871px;background:#1d1a1c;"></div>
<div class="a" style="left:1579px;top:104px;width:16px;height:871px;background:#2c282b;"></div>
<div class="a" style="left:1582.8px;top:108px;width:8.2px;height:660px;background:#737174;border-radius:4px"></div>
<div class="t" style="left:1341px;top:107.70px;font-size:13px;line-height:18px;color:#a9a6a8;font-weight:700;letter-spacing:-0.05px;">Materials</div>
<div class="a" style="left:1341.5px;top:130px;width:230px;height:78px;background:#1e1d1e;box-shadow:inset 0 0 0 1px #454244"></div>
<div class="a" style="left:1342.5px;top:131px;width:228px;height:18.5px;background:#4b4a4b;"></div>
<div class="t r" style="left:1350.5px;top:132.22px;font-size:11.5px;line-height:16px;color:#f0f0f0;font-weight:400;letter-spacing:0px;">metal1</div>
<svg class="a" style="left:1348px;top:190.5px;" width="11" height="11" viewBox="0 0 11 11"><path d="M5.5 0.5 V10.5 M0.5 5.5 H10.5" stroke="#e0e0e0" stroke-width="1.3"/></svg>
<svg class="a" style="left:1369px;top:190.5px;" width="11" height="11" viewBox="0 0 11 11"><path d="M0.5 5.5 H10.5" stroke="#e0e0e0" stroke-width="1.3"/></svg>
<div class="a" style="left:1341.5px;top:216px;width:230px;height:1px;background:#3a3538;"></div>
<div class="t" style="left:1341px;top:220.10px;font-size:13px;line-height:18px;color:#a9a6a8;font-weight:700;letter-spacing:-0.05px;">Preview</div>
<svg class="a" style="left:1417px;top:253px;" width="80" height="80" viewBox="0 0 80 80"><defs><radialGradient id="sph" cx="0.5" cy="0.48" r="0.5"><stop offset="0" stop-color="#000"/><stop offset="0.8" stop-color="#020203"/><stop offset="0.93" stop-color="#1c2430"/><stop offset="1" stop-color="#9aa0a8"/></radialGradient><linearGradient id="sphrim" x1="0" y1="0" x2="0" y2="1"><stop offset="0" stop-color="#6d8fb8"/><stop offset="0.45" stop-color="#3d5878"/><stop offset="0.55" stop-color="#6a6e72"/><stop offset="1" stop-color="#d0d0d0"/></linearGradient></defs><circle cx="39.7" cy="39.6" r="37" fill="url(#sph)"/><circle cx="39.7" cy="39.6" r="36.3" fill="none" stroke="url(#sphrim)" stroke-width="1.6" opacity="0.9"/></svg>
<div class="a" style="left:1341.5px;top:351px;width:230px;height:1px;background:#3a3538;"></div>
<div class="t" style="left:1341px;top:355.80px;font-size:13px;line-height:18px;color:#a9a6a8;font-weight:700;letter-spacing:-0.05px;">Identity</div>
<div class="t r" style="left:1293px;width:120px;text-align:right;top:384.49px;font-size:11px;line-height:15px;color:#dedede;font-weight:400;letter-spacing:0px">Name</div>
<div class="a" style="left:1418.5px;top:383.5px;width:152px;height:16.5px;background:#353033;box-shadow:inset 0 -1px 0 #403b3e"></div>
<div class="t r" style="left:1421.8px;top:383.88px;font-size:11.3px;line-height:16px;color:#f0f0f0;font-weight:400;letter-spacing:0px;">metal1</div>
<div class="a" style="left:1341.5px;top:413px;width:230px;height:1px;background:#3a3538;"></div>
<div class="t" style="left:1341px;top:417.20px;font-size:13px;line-height:18px;color:#a9a6a8;font-weight:700;letter-spacing:-0.15px;">Properties</div>
<div class="t r" style="left:1293px;width:120px;text-align:right;top:445.69px;font-size:11px;line-height:15px;color:#dedede;font-weight:400;letter-spacing:0px">Shading</div>
<div class="a" style="left:1419px;top:445px;width:151.5px;height:15.5px;background:#5a5659;border-radius:5px;box-shadow:inset 0 0.5px 0 #6a666a"></div>
<div class="a" style="left:1556.5px;top:446.5px;width:12.5px;height:12.5px;background:#3570dc;border-radius:3.5px"></div>
<svg class="a" style="left:1558.75px;top:446.75px;" width="8" height="12" viewBox="0 0 8 12"><path d="M1.5 4.3 L4 1.8 L6.5 4.3 M1.5 7.7 L4 10.2 L6.5 7.7" fill="none" stroke="#ffffff" stroke-width="1.2" stroke-linecap="round" stroke-linejoin="round"/></svg>
<div class="t r" style="left:1425px;top:444.77px;font-size:11.5px;line-height:16px;color:#eeeeee;font-weight:400;letter-spacing:0px;">Physically Based</div>
<div class="a" style="left:1341.5px;top:465.5px;width:230px;height:1px;background:#3a3538;"></div>
<svg class="a" style="left:1340.5px;top:474px;" width="8" height="10" viewBox="0 0 8 10"><path d="M2.2 1.2 L5.8 5 L2.2 8.8" fill="none" stroke="#8e8b8e" stroke-width="1.4" stroke-linecap="round" stroke-linejoin="round"/></svg>
<div class="t" style="left:1353.5px;top:471.86px;font-size:10.5px;line-height:15px;color:#f0f0f0;font-weight:700;letter-spacing:-0.25px;">Diffuse</div>
<div class="a" style="left:1419.5px;top:471.5px;width:150px;height:15px;background:#625e62;border-radius:5px;box-shadow:inset 0 0.5px 0 #726e72"></div>
<div class="a" style="left:1425.5px;top:475.0px;width:123.5px;height:8px;background:#000000;box-shadow:0 0 0 1.5px #d4d4d4;border-radius:1px"></div>
<div class="a" style="left:1555.5px;top:473.0px;width:12.5px;height:12px;background:#3570dc;border-radius:3.5px"></div>
<svg class="a" style="left:1557.75px;top:473.0px;" width="8" height="12" viewBox="0 0 8 12"><path d="M1.5 4.3 L4 1.8 L6.5 4.3 M1.5 7.7 L4 10.2 L6.5 7.7" fill="none" stroke="#ffffff" stroke-width="1.2" stroke-linecap="round" stroke-linejoin="round"/></svg>
<div class="a" style="left:1341.5px;top:491px;width:230px;height:1px;background:#3a3538;"></div>
<svg class="a" style="left:1340.5px;top:499px;" width="8" height="10" viewBox="0 0 8 10"><path d="M2.2 1.2 L5.8 5 L2.2 8.8" fill="none" stroke="#8e8b8e" stroke-width="1.4" stroke-linecap="round" stroke-linejoin="round"/></svg>
<div class="t" style="left:1353.5px;top:496.86px;font-size:10.5px;line-height:15px;color:#f0f0f0;font-weight:700;letter-spacing:-0.25px;">Metalness</div>
<div class="a" style="left:1419.5px;top:496.5px;width:150px;height:15px;background:#5a5659;border-radius:5px;box-shadow:inset 0 0.5px 0 #6a666a"></div>
<div class="a" style="left:1555.5px;top:498.0px;width:12.5px;height:12px;background:#3570dc;border-radius:3.5px"></div>
<svg class="a" style="left:1557.75px;top:498.0px;" width="8" height="12" viewBox="0 0 8 12"><path d="M1.5 4.3 L4 1.8 L6.5 4.3 M1.5 7.7 L4 10.2 L6.5 7.7" fill="none" stroke="#ffffff" stroke-width="1.2" stroke-linecap="round" stroke-linejoin="round"/></svg>
<div class="t r" style="left:1430px;top:496.02px;font-size:11.5px;line-height:16px;color:#eeeeee;font-weight:400;letter-spacing:0px;">Metallic</div>
<svg class="a" style="left:1340.5px;top:547px;" width="8" height="10" viewBox="0 0 8 10"><path d="M2.2 1.2 L5.8 5 L2.2 8.8" fill="none" stroke="#8e8b8e" stroke-width="1.4" stroke-linecap="round" stroke-linejoin="round"/></svg>
<div class="t" style="left:1353.5px;top:544.86px;font-size:10.5px;line-height:15px;color:#f0f0f0;font-weight:700;letter-spacing:-0.25px;">Roughness</div>
<div class="a" style="left:1419.5px;top:544.5px;width:150px;height:15px;background:#5a5659;border-radius:5px;box-shadow:inset 0 0.5px 0 #6a666a"></div>
<div class="a" style="left:1555.5px;top:546.0px;width:12.5px;height:12px;background:#3570dc;border-radius:3.5px"></div>
<svg class="a" style="left:1557.75px;top:546.0px;" width="8" height="12" viewBox="0 0 8 12"><path d="M1.5 4.3 L4 1.8 L6.5 4.3 M1.5 7.7 L4 10.2 L6.5 7.7" fill="none" stroke="#ffffff" stroke-width="1.2" stroke-linecap="round" stroke-linejoin="round"/></svg>
<div class="t r" style="left:1430px;top:544.02px;font-size:11.5px;line-height:16px;color:#eeeeee;font-weight:400;letter-spacing:0px;">Float value</div>
<svg class="a" style="left:1340.5px;top:595px;" width="8" height="10" viewBox="0 0 8 10"><path d="M2.2 1.2 L5.8 5 L2.2 8.8" fill="none" stroke="#8e8b8e" stroke-width="1.4" stroke-linecap="round" stroke-linejoin="round"/></svg>
<div class="t" style="left:1353.5px;top:592.86px;font-size:10.5px;line-height:15px;color:#f0f0f0;font-weight:700;letter-spacing:-0.25px;">Normal</div>
<div class="a" style="left:1419.5px;top:592.5px;width:150px;height:15px;background:#625e62;border-radius:5px;box-shadow:inset 0 0.5px 0 #726e72"></div>
<div class="a" style="left:1425.5px;top:596.0px;width:123.5px;height:8px;background:#ffffff;box-shadow:0 0 0 1.5px #d4d4d4;border-radius:1px"></div>
<div class="a" style="left:1555.5px;top:594.0px;width:12.5px;height:12px;background:#3570dc;border-radius:3.5px"></div>
<svg class="a" style="left:1557.75px;top:594.0px;" width="8" height="12" viewBox="0 0 8 12"><path d="M1.5 4.3 L4 1.8 L6.5 4.3 M1.5 7.7 L4 10.2 L6.5 7.7" fill="none" stroke="#ffffff" stroke-width="1.2" stroke-linecap="round" stroke-linejoin="round"/></svg>
<div class="a" style="left:1341.5px;top:612px;width:230px;height:1px;background:#3a3538;"></div>
<svg class="a" style="left:1340.5px;top:620.2px;" width="8" height="10" viewBox="0 0 8 10"><path d="M2.2 1.2 L5.8 5 L2.2 8.8" fill="none" stroke="#8e8b8e" stroke-width="1.4" stroke-linecap="round" stroke-linejoin="round"/></svg>
<div class="t" style="left:1353.5px;top:618.06px;font-size:10.5px;line-height:15px;color:#f0f0f0;font-weight:700;letter-spacing:-0.25px;">Transparent</div>
<div class="a" style="left:1419.5px;top:617.7px;width:150px;height:15px;background:#625e62;border-radius:5px;box-shadow:inset 0 0.5px 0 #726e72"></div>
<div class="a" style="left:1425.5px;top:621.2px;width:123.5px;height:8px;background:#ffffff;box-shadow:0 0 0 1.5px #d4d4d4;border-radius:1px"></div>
<div class="a" style="left:1555.5px;top:619.2px;width:12.5px;height:12px;background:#3570dc;border-radius:3.5px"></div>
<svg class="a" style="left:1557.75px;top:619.2px;" width="8" height="12" viewBox="0 0 8 12"><path d="M1.5 4.3 L4 1.8 L6.5 4.3 M1.5 7.7 L4 10.2 L6.5 7.7" fill="none" stroke="#ffffff" stroke-width="1.2" stroke-linecap="round" stroke-linejoin="round"/></svg>
<div class="a" style="left:1341.5px;top:637.2px;width:230px;height:1px;background:#3a3538;"></div>
<svg class="a" style="left:1340.5px;top:645.4px;" width="8" height="10" viewBox="0 0 8 10"><path d="M2.2 1.2 L5.8 5 L2.2 8.8" fill="none" stroke="#8e8b8e" stroke-width="1.4" stroke-linecap="round" stroke-linejoin="round"/></svg>
<div class="t" style="left:1353.5px;top:643.26px;font-size:10.5px;line-height:15px;color:#f0f0f0;font-weight:700;letter-spacing:-0.25px;">Occlusion</div>
<div class="a" style="left:1419.5px;top:642.9px;width:150px;height:15px;background:#625e62;border-radius:5px;box-shadow:inset 0 0.5px 0 #726e72"></div>
<div class="a" style="left:1425.5px;top:646.4px;width:123.5px;height:8px;background:#ffffff;box-shadow:0 0 0 1.5px #d4d4d4;border-radius:1px"></div>
<div class="a" style="left:1555.5px;top:644.4px;width:12.5px;height:12px;background:#3570dc;border-radius:3.5px"></div>
<svg class="a" style="left:1557.75px;top:644.4px;" width="8" height="12" viewBox="0 0 8 12"><path d="M1.5 4.3 L4 1.8 L6.5 4.3 M1.5 7.7 L4 10.2 L6.5 7.7" fill="none" stroke="#ffffff" stroke-width="1.2" stroke-linecap="round" stroke-linejoin="round"/></svg>
<div class="a" style="left:1341.5px;top:662.4px;width:230px;height:1px;background:#3a3538;"></div>
<svg class="a" style="left:1340.5px;top:670.6px;" width="8" height="10" viewBox="0 0 8 10"><path d="M2.2 1.2 L5.8 5 L2.2 8.8" fill="none" stroke="#8e8b8e" stroke-width="1.4" stroke-linecap="round" stroke-linejoin="round"/></svg>
<div class="t" style="left:1353.5px;top:668.46px;font-size:10.5px;line-height:15px;color:#f0f0f0;font-weight:700;letter-spacing:-0.25px;">Illumination</div>
<div class="a" style="left:1419.5px;top:668.1px;width:150px;height:15px;background:#625e62;border-radius:5px;box-shadow:inset 0 0.5px 0 #726e72"></div>
<div class="a" style="left:1425.5px;top:671.6px;width:123.5px;height:8px;background:#000000;box-shadow:0 0 0 1.5px #d4d4d4;border-radius:1px"></div>
<div class="a" style="left:1555.5px;top:669.6px;width:12.5px;height:12px;background:#3570dc;border-radius:3.5px"></div>
<svg class="a" style="left:1557.75px;top:669.6px;" width="8" height="12" viewBox="0 0 8 12"><path d="M1.5 4.3 L4 1.8 L6.5 4.3 M1.5 7.7 L4 10.2 L6.5 7.7" fill="none" stroke="#ffffff" stroke-width="1.2" stroke-linecap="round" stroke-linejoin="round"/></svg>
<div class="a" style="left:1341.5px;top:687.6px;width:230px;height:1px;background:#3a3538;"></div>
<svg class="a" style="left:1340.5px;top:695.6px;" width="8" height="10" viewBox="0 0 8 10"><path d="M2.2 1.2 L5.8 5 L2.2 8.8" fill="none" stroke="#8e8b8e" stroke-width="1.4" stroke-linecap="round" stroke-linejoin="round"/></svg>
<div class="t" style="left:1353.5px;top:693.46px;font-size:10.5px;line-height:15px;color:#f0f0f0;font-weight:700;letter-spacing:-0.25px;">Emission</div>
<div class="a" style="left:1419.5px;top:693.1px;width:150px;height:15px;background:#625e62;border-radius:5px;box-shadow:inset 0 0.5px 0 #726e72"></div>
<div class="a" style="left:1425.5px;top:696.6px;width:123.5px;height:8px;background:#000000;box-shadow:0 0 0 1.5px #d4d4d4;border-radius:1px"></div>
<div class="a" style="left:1555.5px;top:694.6px;width:12.5px;height:12px;background:#3570dc;border-radius:3.5px"></div>
<svg class="a" style="left:1557.75px;top:694.6px;" width="8" height="12" viewBox="0 0 8 12"><path d="M1.5 4.3 L4 1.8 L6.5 4.3 M1.5 7.7 L4 10.2 L6.5 7.7" fill="none" stroke="#ffffff" stroke-width="1.2" stroke-linecap="round" stroke-linejoin="round"/></svg>
<div class="a" style="left:1341.5px;top:712.6px;width:230px;height:1px;background:#3a3538;"></div>
<svg class="a" style="left:1340.5px;top:720.7px;" width="8" height="10" viewBox="0 0 8 10"><path d="M2.2 1.2 L5.8 5 L2.2 8.8" fill="none" stroke="#8e8b8e" stroke-width="1.4" stroke-linecap="round" stroke-linejoin="round"/></svg>
<div class="t" style="left:1353.5px;top:718.56px;font-size:10.5px;line-height:15px;color:#f0f0f0;font-weight:700;letter-spacing:-0.25px;">Multiply</div>
<div class="a" style="left:1419.5px;top:718.2px;width:150px;height:15px;background:#625e62;border-radius:5px;box-shadow:inset 0 0.5px 0 #726e72"></div>
<div class="a" style="left:1425.5px;top:721.7px;width:123.5px;height:8px;background:#ffffff;box-shadow:0 0 0 1.5px #d4d4d4;border-radius:1px"></div>
<div class="a" style="left:1555.5px;top:719.7px;width:12.5px;height:12px;background:#3570dc;border-radius:3.5px"></div>
<svg class="a" style="left:1557.75px;top:719.7px;" width="8" height="12" viewBox="0 0 8 12"><path d="M1.5 4.3 L4 1.8 L6.5 4.3 M1.5 7.7 L4 10.2 L6.5 7.7" fill="none" stroke="#ffffff" stroke-width="1.2" stroke-linecap="round" stroke-linejoin="round"/></svg>
<div class="a" style="left:1341.5px;top:737.7px;width:230px;height:1px;background:#3a3538;"></div>
<svg class="a" style="left:1340.5px;top:745.7px;" width="8" height="10" viewBox="0 0 8 10"><path d="M2.2 1.2 L5.8 5 L2.2 8.8" fill="none" stroke="#8e8b8e" stroke-width="1.4" stroke-linecap="round" stroke-linejoin="round"/></svg>
<div class="t" style="left:1353.5px;top:743.56px;font-size:10.5px;line-height:15px;color:#f0f0f0;font-weight:700;letter-spacing:-0.25px;">Coat</div>
<div class="a" style="left:1419.5px;top:743.2px;width:150px;height:15px;background:#625e62;border-radius:5px;box-shadow:inset 0 0.5px 0 #726e72"></div>
<div class="a" style="left:1425.5px;top:746.7px;width:123.5px;height:8px;background:#000000;box-shadow:0 0 0 1.5px #d4d4d4;border-radius:1px"></div>
<div class="a" style="left:1555.5px;top:744.7px;width:12.5px;height:12px;background:#3570dc;border-radius:3.5px"></div>
<svg class="a" style="left:1557.75px;top:744.7px;" width="8" height="12" viewBox="0 0 8 12"><path d="M1.5 4.3 L4 1.8 L6.5 4.3 M1.5 7.7 L4 10.2 L6.5 7.7" fill="none" stroke="#ffffff" stroke-width="1.2" stroke-linecap="round" stroke-linejoin="round"/></svg>
<div class="a" style="left:1341.5px;top:762.7px;width:230px;height:1px;background:#3a3538;"></div>
<svg class="a" style="left:1340.5px;top:770.7px;" width="8" height="10" viewBox="0 0 8 10"><path d="M2.2 1.2 L5.8 5 L2.2 8.8" fill="none" stroke="#8e8b8e" stroke-width="1.4" stroke-linecap="round" stroke-linejoin="round"/></svg>
<div class="t" style="left:1353.5px;top:768.56px;font-size:10.5px;line-height:15px;color:#f0f0f0;font-weight:700;letter-spacing:-0.25px;">Coat Normal</div>
<div class="a" style="left:1419.5px;top:768.2px;width:150px;height:15px;background:#625e62;border-radius:5px;box-shadow:inset 0 0.5px 0 #726e72"></div>
<div class="a" style="left:1425.5px;top:771.7px;width:123.5px;height:8px;background:#ffffff;box-shadow:0 0 0 1.5px #d4d4d4;border-radius:1px"></div>
<div class="a" style="left:1555.5px;top:769.7px;width:12.5px;height:12px;background:#3570dc;border-radius:3.5px"></div>
<svg class="a" style="left:1557.75px;top:769.7px;" width="8" height="12" viewBox="0 0 8 12"><path d="M1.5 4.3 L4 1.8 L6.5 4.3 M1.5 7.7 L4 10.2 L6.5 7.7" fill="none" stroke="#ffffff" stroke-width="1.2" stroke-linecap="round" stroke-linejoin="round"/></svg>
<div class="a" style="left:1341.5px;top:787.7px;width:230px;height:1px;background:#3a3538;"></div>
<svg class="a" style="left:1340.5px;top:795.7px;" width="8" height="10" viewBox="0 0 8 10"><path d="M2.2 1.2 L5.8 5 L2.2 8.8" fill="none" stroke="#8e8b8e" stroke-width="1.4" stroke-linecap="round" stroke-linejoin="round"/></svg>
<div class="t" style="left:1353.5px;top:793.56px;font-size:10.5px;line-height:15px;color:#f0f0f0;font-weight:700;letter-spacing:-0.25px;">Coat Roughn</div>
<div class="a" style="left:1419.5px;top:793.2px;width:150px;height:15px;background:#625e62;border-radius:5px;box-shadow:inset 0 0.5px 0 #726e72"></div>
<div class="a" style="left:1425.5px;top:796.7px;width:123.5px;height:8px;background:#000000;box-shadow:0 0 0 1.5px #d4d4d4;border-radius:1px"></div>
<div class="a" style="left:1555.5px;top:794.7px;width:12.5px;height:12px;background:#3570dc;border-radius:3.5px"></div>
<svg class="a" style="left:1557.75px;top:794.7px;" width="8" height="12" viewBox="0 0 8 12"><path d="M1.5 4.3 L4 1.8 L6.5 4.3 M1.5 7.7 L4 10.2 L6.5 7.7" fill="none" stroke="#ffffff" stroke-width="1.2" stroke-linecap="round" stroke-linejoin="round"/></svg>
<div class="a" style="left:1341.5px;top:812.7px;width:230px;height:1px;background:#3a3538;"></div>
<svg class="a" style="left:1340.5px;top:820.7px;" width="8" height="10" viewBox="0 0 8 10"><path d="M2.2 1.2 L5.8 5 L2.2 8.8" fill="none" stroke="#8e8b8e" stroke-width="1.4" stroke-linecap="round" stroke-linejoin="round"/></svg>
<div class="t" style="left:1353.5px;top:818.56px;font-size:10.5px;line-height:15px;color:#f0f0f0;font-weight:700;letter-spacing:-0.25px;">Displacemnt</div>
<div class="a" style="left:1419.5px;top:818.2px;width:150px;height:15px;background:#625e62;border-radius:5px;box-shadow:inset 0 0.5px 0 #726e72"></div>
<div class="a" style="left:1425.5px;top:821.7px;width:123.5px;height:8px;background:#000000;box-shadow:0 0 0 1.5px #d4d4d4;border-radius:1px"></div>
<div class="a" style="left:1555.5px;top:819.7px;width:12.5px;height:12px;background:#3570dc;border-radius:3.5px"></div>
<svg class="a" style="left:1557.75px;top:819.7px;" width="8" height="12" viewBox="0 0 8 12"><path d="M1.5 4.3 L4 1.8 L6.5 4.3 M1.5 7.7 L4 10.2 L6.5 7.7" fill="none" stroke="#ffffff" stroke-width="1.2" stroke-linecap="round" stroke-linejoin="round"/></svg>
<div class="a" style="left:1341.5px;top:837.7px;width:230px;height:1px;background:#3a3538;"></div>
<div class="a" style="left:1419px;top:518.5px;width:150.5px;height:16px;background:#2f2a2d;border-radius:5px;box-shadow:inset 0 0 0 0.5px #3f3a3d, 0 0.5px 0 #454043"></div>
<div class="a" style="left:1424.5px;top:526.0px;width:6px;height:1px;background:#9a979a;"></div>
<div class="t r" style="left:1472.75px;width:40px;text-align:center;top:518.34px;font-size:12px;line-height:17px;color:#eeeeee;font-weight:400;letter-spacing:0px">1</div>
<svg class="a" style="left:1557.5px;top:523.0px;" width="7" height="7" viewBox="0 0 7 7"><path d="M3.5 0.5 V6.5 M0.5 3.5 H6.5" stroke="#bdbabd" stroke-width="1"/></svg>
<div class="a" style="left:1341.5px;top:539px;width:230px;height:1px;background:#3a3538;"></div>
<div class="a" style="left:1419px;top:566.5px;width:150.5px;height:16px;background:#2f2a2d;border-radius:5px;box-shadow:inset 0 0 0 0.5px #3f3a3d, 0 0.5px 0 #454043"></div>
<div class="a" style="left:1424.5px;top:574.0px;width:6px;height:1px;background:#9a979a;"></div>
<div class="t r" style="left:1472.75px;width:40px;text-align:center;top:566.34px;font-size:12px;line-height:17px;color:#eeeeee;font-weight:400;letter-spacing:0px">0</div>
<svg class="a" style="left:1557.5px;top:571.0px;" width="7" height="7" viewBox="0 0 7 7"><path d="M3.5 0.5 V6.5 M0.5 3.5 H6.5" stroke="#bdbabd" stroke-width="1"/></svg>
<div class="a" style="left:1341.5px;top:587px;width:230px;height:1px;background:#3a3538;"></div>
<svg class="a" style="left:1344.5px;top:847px;" width="11" height="11" viewBox="0 0 11 11"><path d="M5.5 0.5 V10.5 M0.5 5.5 H10.5" stroke="#9a979a" stroke-width="1.1"/></svg>
<div class="a" style="left:1341.5px;top:873.5px;width:230px;height:1px;background:#3a3538;"></div>
<div class="t" style="left:1341px;top:877.50px;font-size:13px;line-height:18px;color:#a9a6a8;font-weight:700;letter-spacing:-0.05px;">Settings</div>
<div class="t" style="left:1348px;top:905.19px;font-size:11px;line-height:15px;color:#eeeeee;font-weight:700;letter-spacing:-0.3px;">Transparency</div>
<div class="t r" style="left:1293px;width:120px;text-align:right;top:924.99px;font-size:11px;line-height:15px;color:#dedede;font-weight:400;letter-spacing:0px">Mode</div>
<div class="a" style="left:1419.5px;top:925px;width:151px;height:15.5px;background:#5a5659;border-radius:5px;box-shadow:inset 0 0.5px 0 #6a666a"></div>
<div class="a" style="left:1556.5px;top:926.5px;width:12.5px;height:12.5px;background:#3570dc;border-radius:3.5px"></div>
<svg class="a" style="left:1558.75px;top:926.75px;" width="8" height="12" viewBox="0 0 8 12"><path d="M1.5 4.3 L4 1.8 L6.5 4.3 M1.5 7.7 L4 10.2 L6.5 7.7" fill="none" stroke="#ffffff" stroke-width="1.2" stroke-linecap="round" stroke-linejoin="round"/></svg>
<div class="t r" style="left:1425px;top:924.77px;font-size:11.5px;line-height:16px;color:#eeeeee;font-weight:400;letter-spacing:0px;">Default</div>
<div class="t r" style="left:1293px;width:120px;text-align:right;top:948.49px;font-size:11px;line-height:15px;color:#dedede;font-weight:400;letter-spacing:0px">Value</div>
<div class="a" style="left:1419.5px;top:948px;width:151px;height:15.5px;background:#2f2a2d;border-radius:5px;box-shadow:inset 0 0 0 0.5px #3f3a3d, 0 0.5px 0 #454043"></div>
<div class="a" style="left:1425.0px;top:955.25px;width:6px;height:1px;background:#9a979a;"></div>
<div class="t r" style="left:1473.5px;width:40px;text-align:center;top:947.59px;font-size:12px;line-height:17px;color:#eeeeee;font-weight:400;letter-spacing:0px">1</div>
<svg class="a" style="left:1558.5px;top:952.25px;" width="7" height="7" viewBox="0 0 7 7"><path d="M3.5 0.5 V6.5 M0.5 3.5 H6.5" stroke="#bdbabd" stroke-width="1"/></svg>
<div class="a" style="left:1341.5px;top:969px;width:230px;height:1px;background:#3a3538;"></div>
</div>
</body></html>
